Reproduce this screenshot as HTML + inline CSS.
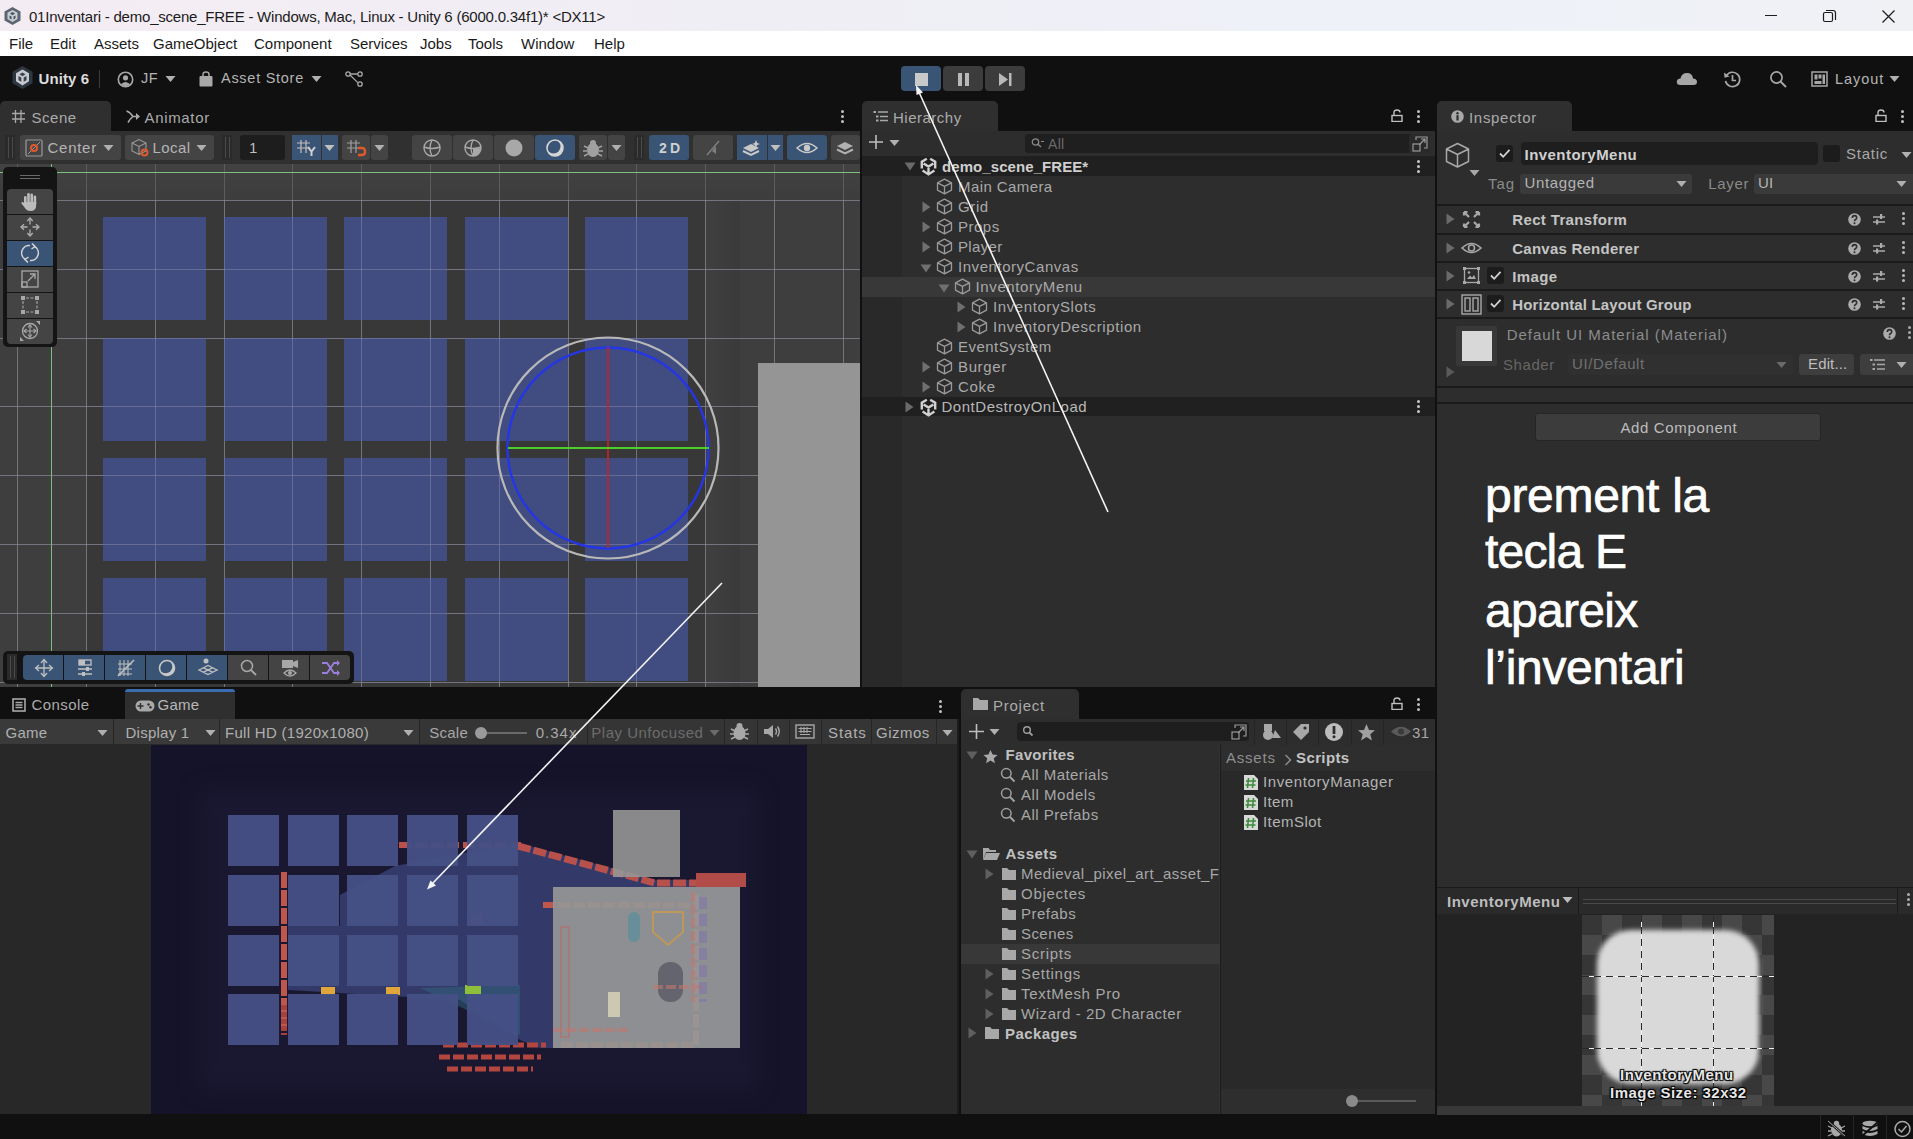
<!DOCTYPE html><html><head><meta charset="utf-8"><style>
html,body{margin:0;padding:0;width:1913px;height:1139px;overflow:hidden;background:#101010;font-family:"Liberation Sans", sans-serif;}
div,svg{box-sizing:border-box;}
</style></head><body>
<div style="position:absolute;left:0px;top:0px;width:1913px;height:31px;background:linear-gradient(90deg,#f4ecf3 0%,#efeef5 45%,#eef2f8 75%,#f0f1f5 100%);"></div>
<div style="position:absolute;left:29px;top:9.30px;font-size:15px;line-height:15px;color:#1b1b1b;font-weight:400;white-space:pre;;letter-spacing:-0.219px;">01Inventari - demo_scene_FREE - Windows, Mac, Linux - Unity 6 (6000.0.34f1)* &lt;DX11&gt;</div>
<div style="position:absolute;left:0px;top:31px;width:1913px;height:25px;background:#ffffff;"></div>
<div style="position:absolute;left:9px;top:35.90px;font-size:15px;line-height:15px;color:#1a1a1a;font-weight:400;white-space:pre;;">File</div>
<div style="position:absolute;left:50px;top:35.90px;font-size:15px;line-height:15px;color:#1a1a1a;font-weight:400;white-space:pre;;">Edit</div>
<div style="position:absolute;left:94px;top:35.90px;font-size:15px;line-height:15px;color:#1a1a1a;font-weight:400;white-space:pre;;">Assets</div>
<div style="position:absolute;left:153px;top:35.90px;font-size:15px;line-height:15px;color:#1a1a1a;font-weight:400;white-space:pre;;">GameObject</div>
<div style="position:absolute;left:254px;top:35.90px;font-size:15px;line-height:15px;color:#1a1a1a;font-weight:400;white-space:pre;;">Component</div>
<div style="position:absolute;left:350px;top:35.90px;font-size:15px;line-height:15px;color:#1a1a1a;font-weight:400;white-space:pre;;">Services</div>
<div style="position:absolute;left:420px;top:35.90px;font-size:15px;line-height:15px;color:#1a1a1a;font-weight:400;white-space:pre;;">Jobs</div>
<div style="position:absolute;left:468px;top:35.90px;font-size:15px;line-height:15px;color:#1a1a1a;font-weight:400;white-space:pre;;">Tools</div>
<div style="position:absolute;left:521px;top:35.90px;font-size:15px;line-height:15px;color:#1a1a1a;font-weight:400;white-space:pre;;">Window</div>
<div style="position:absolute;left:594px;top:35.90px;font-size:15px;line-height:15px;color:#1a1a1a;font-weight:400;white-space:pre;;">Help</div>
<div style="position:absolute;left:0px;top:56px;width:1913px;height:44px;background:#101010;"></div>
<svg style="position:absolute;left:3px;top:6px;" width="19" height="20" viewBox="0 0 19 20"><path d="M9.5 1 L17.5 5.5 L17.5 14.5 L9.5 19 L1.5 14.5 L1.5 5.5 Z" fill="#5d6670"/><path d="M9.5 4 L14.5 6.8 L14.5 13 L9.5 16 L4.5 13 L4.5 6.8 Z" fill="#c9ced6"/><path d="M9.5 6 L12 7.6 L9.5 9.2 L7 7.6Z M6.5 9.5 L8.5 10.6 L8.5 13.5 L6.5 12.3Z M12.5 9.5 L10.5 10.6 L10.5 13.5 L12.5 12.3Z" fill="#4a525c"/></svg>
<div style="position:absolute;left:1765px;top:15px;width:12px;height:1px;background:#1c1c1c;"></div>
<svg style="position:absolute;left:1822px;top:9px;" width="15" height="15" viewBox="0 0 15 15"><rect x="1.5" y="3.5" width="9" height="9" rx="1.5" fill="none" stroke="#1c1c1c" stroke-width="1.2"/><path d="M4 1.5 H11 Q13.5 1.5 13.5 4 V11" fill="none" stroke="#1c1c1c" stroke-width="1.2"/></svg>
<svg style="position:absolute;left:1881px;top:9px;" width="15" height="15" viewBox="0 0 15 15"><path d="M1.5 1.5 L13.5 13.5 M13.5 1.5 L1.5 13.5" stroke="#1c1c1c" stroke-width="1.2"/></svg>
<svg style="position:absolute;left:11px;top:65px;" width="23" height="25" viewBox="0 0 23 25"><path d="M11.5 1 L21.5 6.8 L21.5 18.2 L11.5 24 L1.5 18.2 L1.5 6.8 Z" fill="#2e3640"/><path d="M11.5 4.5 L18 8.3 L18 16.3 L11.5 20.5 L5 16.3 L5 8.3 Z" fill="#c6cad0"/><path d="M11.5 7.5 L14.5 9.3 L11.5 11.2 L8.5 9.3Z M7.5 11 L10.3 12.6 L10.3 16.8 L7.5 15.2Z M15.5 11 L12.7 12.6 L12.7 16.8 L15.5 15.2Z" fill="#39414b"/></svg>
<div style="position:absolute;left:38.5px;top:71.30px;font-size:15px;line-height:15px;color:#dcdcdc;font-weight:700;white-space:pre;;letter-spacing:0.114px;">Unity 6</div>
<div style="position:absolute;left:99px;top:70px;width:1px;height:18px;background:#3a3a3a;"></div>
<svg style="position:absolute;left:117px;top:71px;" width="17" height="17" viewBox="0 0 17 17"><circle cx="8.5" cy="8.5" r="7.2" fill="none" stroke="#a8a8a8" stroke-width="1.6"/><circle cx="8.5" cy="6.8" r="2.6" fill="#a8a8a8"/><path d="M3.6 13.6 Q8.5 8.5 13.4 13.6 Q8.5 17 3.6 13.6Z" fill="#a8a8a8"/></svg>
<div style="position:absolute;left:141px;top:71.23px;font-size:14.5px;line-height:14.5px;color:#b4b4b4;font-weight:400;white-space:pre;;letter-spacing:0.591px;">JF</div>
<svg style="position:absolute;left:165px;top:75px;" width="11" height="8" viewBox="0 0 11 8"><path d="M0.5 1 L10.5 1 L5.5 7Z" fill="#b0b0b0"/></svg>
<svg style="position:absolute;left:199px;top:71px;" width="14" height="16" viewBox="0 0 14 16"><path d="M4 5 V3.2 Q4 1 7 1 Q10 1 10 3.2 V5" fill="none" stroke="#a8a8a8" stroke-width="1.5"/><rect x="0.5" y="5" width="13" height="10.5" rx="1" fill="#a8a8a8"/></svg>
<div style="position:absolute;left:221px;top:71.23px;font-size:14.5px;line-height:14.5px;color:#b4b4b4;font-weight:400;white-space:pre;;letter-spacing:0.725px;">Asset Store</div>
<svg style="position:absolute;left:311px;top:75px;" width="11" height="8" viewBox="0 0 11 8"><path d="M0.5 1 L10.5 1 L5.5 7Z" fill="#b0b0b0"/></svg>
<svg style="position:absolute;left:345px;top:71px;" width="18" height="16" viewBox="0 0 18 16"><circle cx="3" cy="3" r="2.2" fill="none" stroke="#a8a8a8" stroke-width="1.3"/><circle cx="15" cy="3" r="2.2" fill="none" stroke="#a8a8a8" stroke-width="1.3"/><circle cx="15" cy="13" r="2.2" fill="none" stroke="#a8a8a8" stroke-width="1.3"/><path d="M5.2 3 H12.8 M5 4 L12.8 11.6" stroke="#a8a8a8" stroke-width="1.3" fill="none"/></svg>
<div style="position:absolute;left:901px;top:66px;width:40px;height:25px;background:#3a5475;border-radius:4px"></div>
<div style="position:absolute;left:915px;top:73px;width:13px;height:13px;background:#c9c9c9;"></div>
<div style="position:absolute;left:943px;top:66px;width:40px;height:25px;background:#3c3c3c;border-radius:4px"></div>
<div style="position:absolute;left:958px;top:73px;width:4px;height:13px;background:#b8b8b8;"></div>
<div style="position:absolute;left:965px;top:73px;width:4px;height:13px;background:#b8b8b8;"></div>
<div style="position:absolute;left:985px;top:66px;width:40px;height:25px;background:#3c3c3c;border-radius:4px"></div>
<svg style="position:absolute;left:999px;top:73px;" width="13" height="13" viewBox="0 0 13 13"><path d="M0 0 L9 6.5 L0 13Z" fill="#b8b8b8"/><rect x="10" y="0" width="2.5" height="13" fill="#b8b8b8"/></svg>
<svg style="position:absolute;left:1676px;top:71px;" width="22" height="15" viewBox="0 0 22 15"><path d="M4.5 14 Q0.5 14 0.8 10.5 Q1.2 7.5 4.5 7.5 Q5.5 2 11 2 Q16.5 2 17 7.5 Q21 7.8 21 11 Q21 14 17.5 14Z" fill="#a6a6a6"/></svg>
<svg style="position:absolute;left:1723px;top:70px;" width="19" height="19" viewBox="0 0 19 19"><path d="M3.5 5.5 A7.2 7.2 0 1 1 2.5 11" fill="none" stroke="#a6a6a6" stroke-width="1.7"/><path d="M1 2.5 L1.5 7.8 L6.5 6.5Z" fill="#a6a6a6"/><path d="M9.5 5 V10.5 H13" fill="none" stroke="#a6a6a6" stroke-width="1.7"/></svg>
<svg style="position:absolute;left:1769px;top:70px;" width="19" height="19" viewBox="0 0 19 19"><circle cx="7.5" cy="7.5" r="5.6" fill="none" stroke="#a6a6a6" stroke-width="1.7"/><path d="M11.5 11.5 L17 17" stroke="#a6a6a6" stroke-width="2"/></svg>
<svg style="position:absolute;left:1811px;top:71px;" width="17" height="16" viewBox="0 0 17 16"><rect x="1" y="1" width="15" height="14" fill="none" stroke="#a6a6a6" stroke-width="1.5"/><rect x="3.5" y="3.5" width="3" height="5" fill="#a6a6a6"/><rect x="7.5" y="3.5" width="3" height="4" fill="#a6a6a6"/><rect x="3.5" y="10" width="7" height="3" fill="#a6a6a6"/><rect x="11.5" y="3.5" width="2.5" height="9.5" fill="#a6a6a6"/></svg>
<div style="position:absolute;left:1835px;top:71.73px;font-size:14.5px;line-height:14.5px;color:#b4b4b4;font-weight:400;white-space:pre;;letter-spacing:0.931px;">Layout</div>
<svg style="position:absolute;left:1889px;top:75px;" width="11" height="8" viewBox="0 0 11 8"><path d="M0.5 1 L10.5 1 L5.5 7Z" fill="#b0b0b0"/></svg>
<div style="position:absolute;left:0px;top:101px;width:111px;height:31px;background:#2f2f2f;border-radius:5px 5px 0 0"></div>
<svg style="position:absolute;left:11px;top:109px;" width="15" height="15" viewBox="0 0 15 15"><path d="M4.5 1 V14 M10 1 V14 M1 4.5 H14 M1 10 H14" stroke="#a8a8a8" stroke-width="1.3"/></svg>
<div style="position:absolute;left:31.5px;top:110.00px;font-size:15px;line-height:15px;color:#ababab;font-weight:400;white-space:pre;;letter-spacing:0.538px;">Scene</div>
<svg style="position:absolute;left:125px;top:109px;" width="16" height="15" viewBox="0 0 16 15"><path d="M1.5 2 Q5 3 8 7.5 L14 7.5 M8 7.5 Q5 10 3 13.5" fill="none" stroke="#a8a8a8" stroke-width="1.6"/><path d="M11 4 L15 7.5 L11 11Z" fill="#a8a8a8"/></svg>
<div style="position:absolute;left:144.5px;top:110.00px;font-size:15px;line-height:15px;color:#ababab;font-weight:400;white-space:pre;;letter-spacing:0.667px;">Animator</div>
<div style="position:absolute;left:841px;top:110px;width:3px;height:3px;background:#c0c0c0;border-radius:50%"></div>
<div style="position:absolute;left:841px;top:115px;width:3px;height:3px;background:#c0c0c0;border-radius:50%"></div>
<div style="position:absolute;left:841px;top:120px;width:3px;height:3px;background:#c0c0c0;border-radius:50%"></div>
<div style="position:absolute;left:0px;top:131px;width:860px;height:33px;background:#303030;"></div>
<div style="position:absolute;left:5px;top:135px;width:10px;height:25px;background:#2a2a2a;"></div>
<div style="position:absolute;left:8px;top:137px;width:1px;height:21px;background:#4a4a4a;"></div>
<div style="position:absolute;left:12px;top:137px;width:1px;height:21px;background:#4a4a4a;"></div>
<div style="position:absolute;left:222px;top:135px;width:10px;height:25px;background:#2a2a2a;"></div>
<div style="position:absolute;left:225px;top:137px;width:1px;height:21px;background:#4a4a4a;"></div>
<div style="position:absolute;left:229px;top:137px;width:1px;height:21px;background:#4a4a4a;"></div>
<div style="position:absolute;left:634px;top:135px;width:10px;height:25px;background:#2a2a2a;"></div>
<div style="position:absolute;left:637px;top:137px;width:1px;height:21px;background:#4a4a4a;"></div>
<div style="position:absolute;left:641px;top:137px;width:1px;height:21px;background:#4a4a4a;"></div>
<div style="position:absolute;left:20px;top:135px;width:101px;height:25px;background:#444444;border-radius:3px"></div>
<svg style="position:absolute;left:25px;top:139px;" width="18" height="18" viewBox="0 0 18 18"><rect x="1" y="1" width="16" height="16" rx="1" fill="none" stroke="#9a9a9a" stroke-width="1.2"/><path d="M3 15 L15 3" stroke="#9a9a9a" stroke-width="1"/><circle cx="9" cy="9" r="3" fill="none" stroke="#e0592e" stroke-width="2"/></svg>
<div style="position:absolute;left:47.5px;top:139.90px;font-size:15px;line-height:15px;color:#b4b4b4;font-weight:400;white-space:pre;;letter-spacing:0.734px;">Center</div>
<svg style="position:absolute;left:103px;top:144px;" width="11" height="8" viewBox="0 0 11 8"><path d="M0.5 1 L10.5 1 L5.5 7Z" fill="#b0b0b0"/></svg>
<div style="position:absolute;left:125px;top:135px;width:89px;height:25px;background:#444444;border-radius:3px"></div>
<svg style="position:absolute;left:130px;top:138px;" width="20" height="20" viewBox="0 0 20 20"><path d="M2 5 L9 1.5 L16 5 L16 13 L9 16.5 L2 13Z M2 5 L9 8.5 L16 5 M9 8.5 V16.5" fill="none" stroke="#9a9a9a" stroke-width="1.1"/><circle cx="14.5" cy="14.5" r="3" fill="none" stroke="#e0592e" stroke-width="2"/></svg>
<div style="position:absolute;left:152.5px;top:139.90px;font-size:15px;line-height:15px;color:#b4b4b4;font-weight:400;white-space:pre;;letter-spacing:0.460px;">Local</div>
<svg style="position:absolute;left:196px;top:144px;" width="11" height="8" viewBox="0 0 11 8"><path d="M0.5 1 L10.5 1 L5.5 7Z" fill="#b0b0b0"/></svg>
<div style="position:absolute;left:240px;top:135px;width:45px;height:25px;background:#1d1d1d;border-radius:3px"></div>
<div style="position:absolute;left:249px;top:139.90px;font-size:15px;line-height:15px;color:#bdbdbd;font-weight:400;white-space:pre;;">1</div>
<div style="position:absolute;left:292px;top:135px;width:29px;height:25px;background:#3a5475;border-radius:0px"></div>
<div style="position:absolute;left:322px;top:135px;width:16px;height:25px;background:#3a5475;border-radius:0px"></div>
<svg style="position:absolute;left:296px;top:139px;" width="22" height="18" viewBox="0 0 22 18"><path d="M5 1 V14 M10 1 V14 M1 4 H14 M1 9 H14" stroke="#c0c0c0" stroke-width="1.2"/><path d="M12 8 L15.5 12.5 L19 8 M15.5 12.5 V17" stroke="#d0d0d0" stroke-width="2" fill="none"/></svg>
<svg style="position:absolute;left:324px;top:144px;" width="11" height="8" viewBox="0 0 11 8"><path d="M0.5 1 L10.5 1 L5.5 7Z" fill="#c0c0c0"/></svg>
<div style="position:absolute;left:342px;top:135px;width:28px;height:25px;background:#444444;border-radius:3px"></div>
<div style="position:absolute;left:371px;top:135px;width:17px;height:25px;background:#444444;border-radius:3px"></div>
<svg style="position:absolute;left:346px;top:139px;" width="22" height="18" viewBox="0 0 22 18"><path d="M5 1 V14 M10 1 V14 M1 4 H14 M1 9 H14" stroke="#a0a0a0" stroke-width="1.2"/><path d="M12 9 H16 Q19 9 19 12.5 Q19 16 16 16 H12" stroke="#e0592e" stroke-width="2.4" fill="none"/></svg>
<svg style="position:absolute;left:374px;top:144px;" width="11" height="8" viewBox="0 0 11 8"><path d="M0.5 1 L10.5 1 L5.5 7Z" fill="#b0b0b0"/></svg>
<div style="position:absolute;left:412px;top:135px;width:40px;height:25px;background:#444444;border-radius:3px"></div>
<div style="position:absolute;left:453px;top:135px;width:40px;height:25px;background:#444444;border-radius:3px"></div>
<div style="position:absolute;left:494px;top:135px;width:40px;height:25px;background:#444444;border-radius:3px"></div>
<svg style="position:absolute;left:420px;top:138px;" width="24" height="20" viewBox="0 0 24 20"><circle cx="12" cy="10" r="8" fill="none" stroke="#a8a8a8" stroke-width="1.4"/><path d="M4 9 Q12 12 20 9 M12 2 Q8 10 12 18" fill="none" stroke="#a8a8a8" stroke-width="1.4"/></svg>
<svg style="position:absolute;left:461px;top:138px;" width="24" height="20" viewBox="0 0 24 20"><circle cx="12" cy="10" r="8" fill="none" stroke="#a8a8a8" stroke-width="1.4"/><path d="M4 9 Q12 12 20 9 M12 2 Q8 10 12 18" fill="none" stroke="#a8a8a8" stroke-width="1.4"/><path d="M12 11 L20 10 A8 8 0 0 1 12 18Z" fill="#a8a8a8"/></svg>
<svg style="position:absolute;left:502px;top:138px;" width="24" height="20" viewBox="0 0 24 20"><circle cx="12" cy="10" r="8.5" fill="#a8a8a8"/></svg>
<div style="position:absolute;left:535px;top:135px;width:40px;height:25px;background:#3a5475;border-radius:3px"></div>
<svg style="position:absolute;left:543px;top:138px;" width="24" height="20" viewBox="0 0 24 20"><mask id="mk1"><rect width="24" height="20" fill="#fff"/><circle cx="10.5" cy="8.5" r="7" fill="#000"/></mask><circle cx="12" cy="10" r="8" fill="none" stroke="#d4d4d4" stroke-width="1.6"/><circle cx="12" cy="10" r="8" fill="#d4d4d4" mask="url(#mk1)"/></svg>
<div style="position:absolute;left:579px;top:135px;width:28px;height:25px;background:#444444;border-radius:3px"></div>
<div style="position:absolute;left:608px;top:135px;width:17px;height:25px;background:#444444;border-radius:3px"></div>
<svg style="position:absolute;left:582px;top:138px;" width="22" height="20" viewBox="0 0 22 20"><ellipse cx="11" cy="12" rx="6" ry="7" fill="#a0a0a0"/><circle cx="11" cy="5" r="3" fill="#a0a0a0"/><path d="M2 8 L6 10 M20 8 L16 10 M1 13 H5 M21 13 H17 M2 18 L6 16 M20 18 L16 16" stroke="#a0a0a0" stroke-width="1.4"/></svg>
<svg style="position:absolute;left:611px;top:144px;" width="11" height="8" viewBox="0 0 11 8"><path d="M0.5 1 L10.5 1 L5.5 7Z" fill="#b0b0b0"/></svg>
<div style="position:absolute;left:649px;top:135px;width:40px;height:25px;background:#3a5475;border-radius:3px"></div>
<div style="position:absolute;left:659px;top:140.75px;font-size:14px;line-height:14px;color:#d0d0d0;font-weight:700;white-space:pre;;letter-spacing:3.294px;">2D</div>
<div style="position:absolute;left:693px;top:135px;width:40px;height:25px;background:#444444;border-radius:3px"></div>
<svg style="position:absolute;left:703px;top:138px;" width="20" height="20" viewBox="0 0 20 20"><path d="M4 17 L16 3" stroke="#808080" stroke-width="1.4"/><path d="M9 13 L13 8 V16Z" fill="#808080"/></svg>
<div style="position:absolute;left:737px;top:135px;width:30px;height:25px;background:#3a5475;border-radius:0px"></div>
<div style="position:absolute;left:768px;top:135px;width:15px;height:25px;background:#3a5475;border-radius:0px"></div>
<svg style="position:absolute;left:741px;top:139px;" width="22" height="18" viewBox="0 0 22 18"><path d="M2 9 L10 5 L18 9 L10 13Z" fill="#c8c8c8"/><path d="M2 12 L10 16 L18 12" fill="none" stroke="#c8c8c8" stroke-width="2"/><path d="M15 1 L16.2 4 L19 5 L16.2 6 L15 9 L13.8 6 L11 5 L13.8 4Z" fill="#c8c8c8"/></svg>
<svg style="position:absolute;left:770px;top:144px;" width="11" height="8" viewBox="0 0 11 8"><path d="M0.5 1 L10.5 1 L5.5 7Z" fill="#c0c0c0"/></svg>
<div style="position:absolute;left:787px;top:135px;width:40px;height:25px;background:#3a5475;border-radius:3px"></div>
<svg style="position:absolute;left:796px;top:141px;" width="22" height="14" viewBox="0 0 22 14"><path d="M1 7 Q11 -2 21 7 Q11 16 1 7Z" fill="none" stroke="#c8c8c8" stroke-width="1.6"/><circle cx="11" cy="7" r="3.2" fill="#c8c8c8"/></svg>
<div style="position:absolute;left:831px;top:135px;width:29px;height:25px;background:#444444;border-radius:3px"></div>
<svg style="position:absolute;left:835px;top:139px;" width="20" height="18" viewBox="0 0 20 18"><path d="M2 7 L10 3 L18 7 L10 11Z" fill="#b0b0b0"/><path d="M2 10.5 L10 14.5 L18 10.5" fill="none" stroke="#b0b0b0" stroke-width="2"/></svg>
<div style="position:absolute;left:0px;top:164px;width:860px;height:523px;background:#3e3e3e;"></div>
<div style="position:absolute;left:0px;top:164px;width:860px;height:36px;background:linear-gradient(180deg,#424242,#3d3d3d);"></div>
<div style="position:absolute;left:705px;top:200px;width:35px;height:487px;background:linear-gradient(90deg,#404040,#3a3a3a);"></div>
<div style="position:absolute;left:86px;top:200px;width:619px;height:487px;background:#383838;"></div>
<div style="position:absolute;left:17px;top:164px;width:1px;height:523px;background:#5c5c5c;"></div>
<div style="position:absolute;left:86px;top:164px;width:1px;height:523px;background:#5c5c5c;"></div>
<div style="position:absolute;left:155px;top:164px;width:1px;height:523px;background:#5c5c5c;"></div>
<div style="position:absolute;left:224px;top:164px;width:1px;height:523px;background:#5c5c5c;"></div>
<div style="position:absolute;left:292px;top:164px;width:1px;height:523px;background:#5c5c5c;"></div>
<div style="position:absolute;left:361px;top:164px;width:1px;height:523px;background:#5c5c5c;"></div>
<div style="position:absolute;left:430px;top:164px;width:1px;height:523px;background:#5c5c5c;"></div>
<div style="position:absolute;left:499px;top:164px;width:1px;height:523px;background:#5c5c5c;"></div>
<div style="position:absolute;left:568px;top:164px;width:1px;height:523px;background:#5c5c5c;"></div>
<div style="position:absolute;left:636px;top:164px;width:1px;height:523px;background:#5c5c5c;"></div>
<div style="position:absolute;left:705px;top:164px;width:1px;height:523px;background:#5c5c5c;"></div>
<div style="position:absolute;left:774px;top:164px;width:1px;height:523px;background:#5c5c5c;"></div>
<div style="position:absolute;left:843px;top:164px;width:1px;height:523px;background:#5c5c5c;"></div>
<div style="position:absolute;left:0px;top:200px;width:860px;height:1px;background:#5c5c5c;"></div>
<div style="position:absolute;left:0px;top:269px;width:860px;height:1px;background:#5c5c5c;"></div>
<div style="position:absolute;left:0px;top:338px;width:860px;height:1px;background:#5c5c5c;"></div>
<div style="position:absolute;left:0px;top:406px;width:860px;height:1px;background:#5c5c5c;"></div>
<div style="position:absolute;left:0px;top:475px;width:860px;height:1px;background:#5c5c5c;"></div>
<div style="position:absolute;left:0px;top:544px;width:860px;height:1px;background:#5c5c5c;"></div>
<div style="position:absolute;left:0px;top:613px;width:860px;height:1px;background:#5c5c5c;"></div>
<div style="position:absolute;left:0px;top:682px;width:860px;height:1px;background:#5c5c5c;"></div>
<div style="position:absolute;left:51px;top:164px;width:1px;height:523px;background:#79c27a;"></div>
<div style="position:absolute;left:0px;top:172px;width:860px;height:1px;background:#79c27a;"></div>
<div style="position:absolute;left:103px;top:216.5px;width:103px;height:103px;background:rgba(66,78,135,0.92);"></div>
<div style="position:absolute;left:103px;top:337.5px;width:103px;height:103px;background:rgba(66,78,135,0.92);"></div>
<div style="position:absolute;left:103px;top:458px;width:103px;height:103px;background:rgba(66,78,135,0.92);"></div>
<div style="position:absolute;left:103px;top:578px;width:103px;height:103px;background:rgba(66,78,135,0.92);"></div>
<div style="position:absolute;left:223.5px;top:216.5px;width:103px;height:103px;background:rgba(66,78,135,0.92);"></div>
<div style="position:absolute;left:223.5px;top:337.5px;width:103px;height:103px;background:rgba(66,78,135,0.92);"></div>
<div style="position:absolute;left:223.5px;top:458px;width:103px;height:103px;background:rgba(66,78,135,0.92);"></div>
<div style="position:absolute;left:223.5px;top:578px;width:103px;height:103px;background:rgba(66,78,135,0.92);"></div>
<div style="position:absolute;left:344px;top:216.5px;width:103px;height:103px;background:rgba(66,78,135,0.92);"></div>
<div style="position:absolute;left:344px;top:337.5px;width:103px;height:103px;background:rgba(66,78,135,0.92);"></div>
<div style="position:absolute;left:344px;top:458px;width:103px;height:103px;background:rgba(66,78,135,0.92);"></div>
<div style="position:absolute;left:344px;top:578px;width:103px;height:103px;background:rgba(66,78,135,0.92);"></div>
<div style="position:absolute;left:464.5px;top:216.5px;width:103px;height:103px;background:rgba(66,78,135,0.92);"></div>
<div style="position:absolute;left:464.5px;top:337.5px;width:103px;height:103px;background:rgba(66,78,135,0.92);"></div>
<div style="position:absolute;left:464.5px;top:458px;width:103px;height:103px;background:rgba(66,78,135,0.92);"></div>
<div style="position:absolute;left:464.5px;top:578px;width:103px;height:103px;background:rgba(66,78,135,0.92);"></div>
<div style="position:absolute;left:585px;top:216.5px;width:103px;height:103px;background:rgba(66,78,135,0.92);"></div>
<div style="position:absolute;left:585px;top:337.5px;width:103px;height:103px;background:rgba(66,78,135,0.92);"></div>
<div style="position:absolute;left:585px;top:458px;width:103px;height:103px;background:rgba(66,78,135,0.92);"></div>
<div style="position:absolute;left:585px;top:578px;width:103px;height:103px;background:rgba(66,78,135,0.92);"></div>
<div style="position:absolute;left:17px;top:200px;width:1px;height:487px;background:rgba(150,150,175,0.42);"></div>
<div style="position:absolute;left:86px;top:200px;width:1px;height:487px;background:rgba(150,150,175,0.42);"></div>
<div style="position:absolute;left:155px;top:200px;width:1px;height:487px;background:rgba(150,150,175,0.42);"></div>
<div style="position:absolute;left:224px;top:200px;width:1px;height:487px;background:rgba(150,150,175,0.42);"></div>
<div style="position:absolute;left:292px;top:200px;width:1px;height:487px;background:rgba(150,150,175,0.42);"></div>
<div style="position:absolute;left:361px;top:200px;width:1px;height:487px;background:rgba(150,150,175,0.42);"></div>
<div style="position:absolute;left:430px;top:200px;width:1px;height:487px;background:rgba(150,150,175,0.42);"></div>
<div style="position:absolute;left:499px;top:200px;width:1px;height:487px;background:rgba(150,150,175,0.42);"></div>
<div style="position:absolute;left:568px;top:200px;width:1px;height:487px;background:rgba(150,150,175,0.42);"></div>
<div style="position:absolute;left:636px;top:200px;width:1px;height:487px;background:rgba(150,150,175,0.42);"></div>
<div style="position:absolute;left:705px;top:200px;width:1px;height:487px;background:rgba(150,150,175,0.42);"></div>
<div style="position:absolute;left:774px;top:200px;width:1px;height:487px;background:rgba(150,150,175,0.42);"></div>
<div style="position:absolute;left:843px;top:200px;width:1px;height:487px;background:rgba(150,150,175,0.42);"></div>
<div style="position:absolute;left:0px;top:200px;width:860px;height:1px;background:rgba(150,150,175,0.42);"></div>
<div style="position:absolute;left:0px;top:269px;width:860px;height:1px;background:rgba(150,150,175,0.42);"></div>
<div style="position:absolute;left:0px;top:338px;width:860px;height:1px;background:rgba(150,150,175,0.42);"></div>
<div style="position:absolute;left:0px;top:406px;width:860px;height:1px;background:rgba(150,150,175,0.42);"></div>
<div style="position:absolute;left:0px;top:475px;width:860px;height:1px;background:rgba(150,150,175,0.42);"></div>
<div style="position:absolute;left:0px;top:544px;width:860px;height:1px;background:rgba(150,150,175,0.42);"></div>
<div style="position:absolute;left:0px;top:613px;width:860px;height:1px;background:rgba(150,150,175,0.42);"></div>
<div style="position:absolute;left:0px;top:682px;width:860px;height:1px;background:rgba(150,150,175,0.42);"></div>
<div style="position:absolute;left:758px;top:363px;width:102px;height:324px;background:#959595;"></div>
<svg style="position:absolute;left:490px;top:330px;" width="240" height="240" viewBox="0 0 240 240"><circle cx="118" cy="118" r="110.5" fill="none" stroke="#b8b8b8" stroke-width="2.2"/><circle cx="118" cy="118" r="100.5" fill="none" stroke="#2436e6" stroke-width="2.4"/><path d="M118 17 V218" stroke="#c22" stroke-width="1.6"/><path d="M18 118 H219" stroke="#4ccf2a" stroke-width="2.2"/></svg>
<div style="position:absolute;left:3px;top:167px;width:54px;height:180px;background:#141414;border-radius:5px"></div>
<div style="position:absolute;left:20px;top:175px;width:20px;height:1px;background:#6a6a6a;"></div>
<div style="position:absolute;left:20px;top:178px;width:20px;height:1px;background:#6a6a6a;"></div>
<div style="position:absolute;left:7px;top:189px;width:46px;height:25px;background:#444444;border-radius:4px 4px 0 0"></div>
<div style="position:absolute;left:7px;top:215px;width:46px;height:25px;background:#444444;border-radius:0"></div>
<div style="position:absolute;left:7px;top:241px;width:46px;height:25px;background:#3a5475;border-radius:0"></div>
<div style="position:absolute;left:7px;top:267px;width:46px;height:25px;background:#444444;border-radius:0"></div>
<div style="position:absolute;left:7px;top:293px;width:46px;height:25px;background:#444444;border-radius:0"></div>
<div style="position:absolute;left:7px;top:319px;width:46px;height:25px;background:#444444;border-radius:0 0 4px 4px"></div>
<svg style="position:absolute;left:19px;top:191px;" width="22" height="22" viewBox="0 0 22 22"><rect x="5" y="5" width="2.6" height="9" rx="1.3" fill="#bcbcbc"/><rect x="8.2" y="2" width="2.6" height="11" rx="1.3" fill="#bcbcbc"/><rect x="11.4" y="2.5" width="2.6" height="10.5" rx="1.3" fill="#bcbcbc"/><rect x="14.6" y="4.5" width="2.6" height="9" rx="1.3" fill="#bcbcbc"/><path d="M5 11 H17.2 V14 Q17.2 20 11.5 20 Q7.5 20 6 17 L2.5 12.5 Q2 11.3 3.3 11 Q4.2 10.8 5 12Z" fill="#bcbcbc"/></svg>
<svg style="position:absolute;left:19px;top:216px;" width="22" height="22" viewBox="0 0 22 22"><path d="M11 2.5 V8.5 M11 13.5 V19.5 M2.5 11 H8.5 M13.5 11 H19.5" stroke="#b0b0b0" stroke-width="1.3"/><path d="M8.3 5 L11 2 L13.7 5 M8.3 17 L11 20 L13.7 17 M5 8.3 L2 11 L5 13.7 M17 8.3 L20 11 L17 13.7" fill="none" stroke="#b0b0b0" stroke-width="1.3"/></svg>
<svg style="position:absolute;left:19px;top:242px;" width="22" height="22" viewBox="0 0 22 22"><path d="M15.5 4.5 A7.5 7.5 0 0 1 11 18.5 M6.5 17.5 A7.5 7.5 0 0 1 11 3.5" fill="none" stroke="#d4d4d4" stroke-width="1.5"/><path d="M13 1.5 L16 4.5 L12.5 7 M9 20.5 L6 17.5 L9.5 15" fill="none" stroke="#d4d4d4" stroke-width="1.5"/></svg>
<svg style="position:absolute;left:19px;top:268px;" width="22" height="22" viewBox="0 0 22 22"><rect x="3" y="3" width="16" height="16" fill="none" stroke="#a8a8a8" stroke-width="1.3"/><rect x="3" y="14" width="5" height="5" fill="none" stroke="#a8a8a8" stroke-width="1.3"/><path d="M9 13 L16 6 M11 6 H16 V11" fill="none" stroke="#a8a8a8" stroke-width="1.3"/></svg>
<svg style="position:absolute;left:19px;top:294px;" width="22" height="22" viewBox="0 0 22 22"><path d="M7 4 H15 M7 18 H15 M4 7 V15 M18 7 V15" stroke="#a8a8a8" stroke-width="1.1" stroke-dasharray="3 1.5"/><rect x="2" y="2" width="4" height="4" fill="#a8a8a8"/><rect x="16" y="2" width="4" height="4" fill="#a8a8a8"/><rect x="2" y="16" width="4" height="4" fill="#a8a8a8"/><rect x="16" y="16" width="4" height="4" fill="#a8a8a8"/></svg>
<svg style="position:absolute;left:19px;top:320px;" width="22" height="22" viewBox="0 0 22 22"><circle cx="11" cy="11" r="7.5" fill="none" stroke="#a8a8a8" stroke-width="1.3"/><path d="M11 5.5 V16.5 M5.5 11 H16.5" stroke="#a8a8a8" stroke-width="1.1"/><path d="M9 7.5 L11 5 L13 7.5 M9 14.5 L11 17 L13 14.5 M7.5 9 L5 11 L7.5 13 M14.5 9 L17 11 L14.5 13" fill="none" stroke="#a8a8a8" stroke-width="1.1"/><path d="M1 21 L5 21 L1 17Z M21 1 L17 1 L21 5Z" fill="#a8a8a8"/></svg>
<div style="position:absolute;left:3px;top:651px;width:351px;height:33px;background:#141414;border-radius:5px"></div>
<div style="position:absolute;left:7px;top:654px;width:10px;height:26px;background:#2a2a2a;"></div>
<div style="position:absolute;left:10px;top:656px;width:1px;height:22px;background:#4a4a4a;"></div>
<div style="position:absolute;left:14px;top:656px;width:1px;height:22px;background:#4a4a4a;"></div>
<div style="position:absolute;left:23px;top:655px;width:40px;height:25px;background:#3a5475;border-radius:4px 0 0 4px"></div>
<div style="position:absolute;left:64px;top:655px;width:40px;height:25px;background:#3a5475;border-radius:0"></div>
<div style="position:absolute;left:105px;top:655px;width:40px;height:25px;background:#3a5475;border-radius:0"></div>
<div style="position:absolute;left:146px;top:655px;width:40px;height:25px;background:#3a5475;border-radius:0"></div>
<div style="position:absolute;left:187px;top:655px;width:40px;height:25px;background:#3a5475;border-radius:0"></div>
<div style="position:absolute;left:228px;top:655px;width:40px;height:25px;background:#444444;border-radius:0"></div>
<div style="position:absolute;left:269px;top:655px;width:40px;height:25px;background:#444444;border-radius:0"></div>
<div style="position:absolute;left:310px;top:655px;width:40px;height:25px;background:#444444;border-radius:0 4px 4px 0"></div>
<svg style="position:absolute;left:33px;top:657px;" width="22" height="22" viewBox="0 0 22 22"><path d="M11 3 V19 M3 11 H19" stroke="#c0c0c0" stroke-width="1.3"/><path d="M8 6 L11 2.5 L14 6 M8 16 L11 19.5 L14 16 M6 8 L2.5 11 L6 14 M16 8 L19.5 11 L16 14" fill="none" stroke="#c0c0c0" stroke-width="1.3"/></svg>
<svg style="position:absolute;left:74px;top:657px;" width="22" height="22" viewBox="0 0 22 22"><rect x="5" y="3" width="12" height="5" fill="none" stroke="#c0c0c0" stroke-width="1.3"/><rect x="5" y="3" width="6" height="5" fill="#c0c0c0"/><path d="M4 12 H18 M4 17 H18" stroke="#c0c0c0" stroke-width="1.3"/><rect x="12" y="10" width="3" height="4" fill="#c0c0c0"/><rect x="8" y="15" width="3" height="4" fill="#c0c0c0"/></svg>
<svg style="position:absolute;left:115px;top:657px;" width="22" height="22" viewBox="0 0 22 22"><path d="M5 3 V19 M9 3 V19 M13 3 V19 M3 7 H17 M3 12 H17 M3 17 H17" stroke="#c0c0c0" stroke-width="1"/><path d="M3 19 L19 3" stroke="#c0c0c0" stroke-width="1.6"/></svg>
<svg style="position:absolute;left:156px;top:657px;" width="22" height="22" viewBox="0 0 22 22"><mask id="mk2"><rect width="22" height="22" fill="#fff"/><circle cx="9.5" cy="9.5" r="6.8" fill="#000"/></mask><circle cx="11" cy="11" r="7.5" fill="none" stroke="#c8c8c8" stroke-width="1.6"/><circle cx="11" cy="11" r="7.5" fill="#c8c8c8" mask="url(#mk2)"/></svg>
<svg style="position:absolute;left:197px;top:657px;" width="22" height="22" viewBox="0 0 22 22"><circle cx="9" cy="4" r="2.5" fill="#c0c0c0"/><path d="M2 13 L11 8.5 L20 13 L11 17.5Z M6.5 10.8 L15.5 15.2 M15.5 10.8 L6.5 15.2" fill="none" stroke="#c0c0c0" stroke-width="1.3"/></svg>
<svg style="position:absolute;left:238px;top:657px;" width="22" height="22" viewBox="0 0 22 22"><circle cx="9" cy="9" r="5.5" fill="none" stroke="#a8a8a8" stroke-width="1.5"/><path d="M13 13 L18 18" stroke="#a8a8a8" stroke-width="1.8"/></svg>
<svg style="position:absolute;left:279px;top:657px;" width="22" height="22" viewBox="0 0 22 22"><rect x="3" y="3" width="11" height="8" fill="#a8a8a8"/><path d="M14 5 L19 3 V11 L14 9Z" fill="#a8a8a8"/><path d="M5 16 Q11 10 17 16 Q11 22 5 16Z" fill="none" stroke="#a8a8a8" stroke-width="1.3"/><circle cx="11" cy="16" r="2" fill="#a8a8a8"/></svg>
<svg style="position:absolute;left:320px;top:657px;" width="22" height="22" viewBox="0 0 22 22"><path d="M2 6 H7 L14 16 H19 M2 16 H7 L14 6 H19" fill="none" stroke="#9b7fdc" stroke-width="1.8"/><path d="M17 3 L20 6 L17 9Z M17 13 L20 16 L17 19Z" fill="#9b7fdc"/></svg>
<div style="position:absolute;left:862px;top:101px;width:136px;height:31px;background:#2f2f2f;border-radius:5px 5px 0 0"></div>
<svg style="position:absolute;left:873px;top:110px;" width="16" height="13" viewBox="0 0 16 13"><rect x="0.5" y="1" width="2.5" height="2" fill="#a8a8a8"/><path d="M5 2 H15" stroke="#a8a8a8" stroke-width="1.5"/><rect x="3" y="5.5" width="2.5" height="2" fill="#a8a8a8"/><path d="M7 6.5 H15" stroke="#a8a8a8" stroke-width="1.5"/><rect x="3" y="9.5" width="2.5" height="2" fill="#a8a8a8"/><path d="M7 10.5 H15" stroke="#a8a8a8" stroke-width="1.5"/></svg>
<div style="position:absolute;left:893px;top:110.00px;font-size:15px;line-height:15px;color:#ababab;font-weight:400;white-space:pre;;letter-spacing:0.502px;">Hierarchy</div>
<svg style="position:absolute;left:1391px;top:109px;" width="12" height="13" viewBox="0 0 12 13"><path d="M3 6 V3.5 Q3 1 6 1 Q9 1 9 3.5" fill="none" stroke="#c0c0c0" stroke-width="1.4"/><rect x="1" y="6.5" width="10" height="6" fill="none" stroke="#c0c0c0" stroke-width="1.4"/></svg>
<div style="position:absolute;left:1417px;top:110px;width:3px;height:3px;background:#c0c0c0;border-radius:50%"></div>
<div style="position:absolute;left:1417px;top:115px;width:3px;height:3px;background:#c0c0c0;border-radius:50%"></div>
<div style="position:absolute;left:1417px;top:120px;width:3px;height:3px;background:#c0c0c0;border-radius:50%"></div>
<div style="position:absolute;left:862px;top:131px;width:573px;height:25px;background:#2d2d2d;"></div>
<svg style="position:absolute;left:868px;top:134px;" width="16" height="16" viewBox="0 0 16 16"><path d="M8 1 V15 M1 8 H15" stroke="#bdbdbd" stroke-width="1.6"/></svg>
<svg style="position:absolute;left:889px;top:139px;" width="11" height="8" viewBox="0 0 11 8"><path d="M0.5 1 L10.5 1 L5.5 7Z" fill="#b0b0b0"/></svg>
<div style="position:absolute;left:1025px;top:134px;width:405px;height:19px;background:#1f1f1f;border-radius:4px"></div>
<svg style="position:absolute;left:1031px;top:137px;" width="14" height="12" viewBox="0 0 14 12"><circle cx="4.5" cy="5" r="3.2" fill="none" stroke="#8a8a8a" stroke-width="1.3"/><path d="M7 7.2 L10 10" stroke="#8a8a8a" stroke-width="1.4"/><path d="M10 4.5 H13" stroke="#8a8a8a" stroke-width="1"/></svg>
<div style="position:absolute;left:1048px;top:137.15px;font-size:14px;line-height:14px;color:#6a6a6a;font-weight:400;white-space:pre;;letter-spacing:0.319px;">All</div>
<div style="position:absolute;left:1409px;top:134px;width:21px;height:19px;background:#2a2a2a;border-radius:3px"></div>
<svg style="position:absolute;left:1412px;top:136px;" width="16" height="16" viewBox="0 0 16 16"><rect x="1" y="8" width="7" height="7" fill="none" stroke="#9a9a9a" stroke-width="1.2"/><path d="M4 4 V1 H15 V12 H12 M7 9 L13 3 M9 3 H13 V7" fill="none" stroke="#9a9a9a" stroke-width="1.2"/></svg>
<div style="position:absolute;left:862px;top:156px;width:573px;height:531px;background:#2d2d2d;"></div>
<div style="position:absolute;left:862px;top:176px;width:40px;height:511px;background:#292929;"></div>
<div style="position:absolute;left:862px;top:156px;width:573px;height:20px;background:#202020;"></div>
<svg style="position:absolute;left:904px;top:162px;" width="12" height="9" viewBox="0 0 12 9"><path d="M0.5 0.5 H11.5 L6 8.5Z" fill="#6a6a6a"/></svg>
<svg style="position:absolute;left:920px;top:157px;" width="17" height="19" viewBox="0 0 17 19"><path d="M6.8 1.8 L1.8 4.8 V11.6 M10.2 1.8 L15.2 4.8 V11.6 M2.6 13.6 L8.5 17.4 L14.4 13.6 M3.6 6.4 L8.5 9.6 L13.4 6.4 M8.5 9.6 V16.8" fill="none" stroke="#d0d0d0" stroke-width="2.4" stroke-linejoin="miter"/></svg>
<div style="position:absolute;left:942px;top:158.80px;font-size:15px;line-height:15px;color:#cfcfcf;font-weight:700;white-space:pre;;letter-spacing:0.075px;">demo_scene_FREE*</div>
<div style="position:absolute;left:1417px;top:160px;width:3px;height:3px;background:#c8c8c8;border-radius:50%"></div>
<div style="position:absolute;left:1417px;top:165px;width:3px;height:3px;background:#c8c8c8;border-radius:50%"></div>
<div style="position:absolute;left:1417px;top:170px;width:3px;height:3px;background:#c8c8c8;border-radius:50%"></div>
<svg style="position:absolute;left:936.0px;top:178px;" width="17" height="17" viewBox="0 0 17 17"><path d="M8.5 1.2 L15.5 4.8 V12.2 L8.5 15.8 L1.5 12.2 V4.8Z M1.5 4.8 L8.5 8.4 L15.5 4.8 M8.5 8.4 V15.8" fill="none" stroke="#9a9a9a" stroke-width="1.3" stroke-linejoin="round"/></svg>
<div style="position:absolute;left:958.0px;top:178.80px;font-size:15px;line-height:15px;color:#a9a9a9;font-weight:400;white-space:pre;;letter-spacing:0.417px;">Main Camera</div>
<svg style="position:absolute;left:922.0px;top:201px;" width="9" height="12" viewBox="0 0 9 12"><path d="M0.5 0.5 V11.5 L8.5 6Z" fill="#6f6f6f"/></svg>
<svg style="position:absolute;left:936.0px;top:198px;" width="17" height="17" viewBox="0 0 17 17"><path d="M8.5 1.2 L15.5 4.8 V12.2 L8.5 15.8 L1.5 12.2 V4.8Z M1.5 4.8 L8.5 8.4 L15.5 4.8 M8.5 8.4 V15.8" fill="none" stroke="#9a9a9a" stroke-width="1.3" stroke-linejoin="round"/></svg>
<div style="position:absolute;left:958.0px;top:198.80px;font-size:15px;line-height:15px;color:#a9a9a9;font-weight:400;white-space:pre;;letter-spacing:0.619px;">Grid</div>
<svg style="position:absolute;left:922.0px;top:221px;" width="9" height="12" viewBox="0 0 9 12"><path d="M0.5 0.5 V11.5 L8.5 6Z" fill="#6f6f6f"/></svg>
<svg style="position:absolute;left:936.0px;top:218px;" width="17" height="17" viewBox="0 0 17 17"><path d="M8.5 1.2 L15.5 4.8 V12.2 L8.5 15.8 L1.5 12.2 V4.8Z M1.5 4.8 L8.5 8.4 L15.5 4.8 M8.5 8.4 V15.8" fill="none" stroke="#9a9a9a" stroke-width="1.3" stroke-linejoin="round"/></svg>
<div style="position:absolute;left:958.0px;top:218.80px;font-size:15px;line-height:15px;color:#a9a9a9;font-weight:400;white-space:pre;;letter-spacing:0.503px;">Props</div>
<svg style="position:absolute;left:922.0px;top:241px;" width="9" height="12" viewBox="0 0 9 12"><path d="M0.5 0.5 V11.5 L8.5 6Z" fill="#6f6f6f"/></svg>
<svg style="position:absolute;left:936.0px;top:238px;" width="17" height="17" viewBox="0 0 17 17"><path d="M8.5 1.2 L15.5 4.8 V12.2 L8.5 15.8 L1.5 12.2 V4.8Z M1.5 4.8 L8.5 8.4 L15.5 4.8 M8.5 8.4 V15.8" fill="none" stroke="#9a9a9a" stroke-width="1.3" stroke-linejoin="round"/></svg>
<div style="position:absolute;left:958.0px;top:238.80px;font-size:15px;line-height:15px;color:#a9a9a9;font-weight:400;white-space:pre;;letter-spacing:0.334px;">Player</div>
<svg style="position:absolute;left:920.0px;top:264px;" width="12" height="9" viewBox="0 0 12 9"><path d="M0.5 0.5 H11.5 L6 8.5Z" fill="#6f6f6f"/></svg>
<svg style="position:absolute;left:936.0px;top:258px;" width="17" height="17" viewBox="0 0 17 17"><path d="M8.5 1.2 L15.5 4.8 V12.2 L8.5 15.8 L1.5 12.2 V4.8Z M1.5 4.8 L8.5 8.4 L15.5 4.8 M8.5 8.4 V15.8" fill="none" stroke="#9a9a9a" stroke-width="1.3" stroke-linejoin="round"/></svg>
<div style="position:absolute;left:958.0px;top:258.80px;font-size:15px;line-height:15px;color:#a9a9a9;font-weight:400;white-space:pre;;letter-spacing:0.546px;">InventoryCanvas</div>
<div style="position:absolute;left:862px;top:277px;width:573px;height:20px;background:#383838;"></div>
<svg style="position:absolute;left:937.5px;top:284px;" width="12" height="9" viewBox="0 0 12 9"><path d="M0.5 0.5 H11.5 L6 8.5Z" fill="#6f6f6f"/></svg>
<svg style="position:absolute;left:953.5px;top:278px;" width="17" height="17" viewBox="0 0 17 17"><path d="M8.5 1.2 L15.5 4.8 V12.2 L8.5 15.8 L1.5 12.2 V4.8Z M1.5 4.8 L8.5 8.4 L15.5 4.8 M8.5 8.4 V15.8" fill="none" stroke="#9a9a9a" stroke-width="1.3" stroke-linejoin="round"/></svg>
<div style="position:absolute;left:975.5px;top:278.80px;font-size:15px;line-height:15px;color:#a9a9a9;font-weight:400;white-space:pre;;letter-spacing:0.622px;">InventoryMenu</div>
<svg style="position:absolute;left:957.0px;top:301px;" width="9" height="12" viewBox="0 0 9 12"><path d="M0.5 0.5 V11.5 L8.5 6Z" fill="#6f6f6f"/></svg>
<svg style="position:absolute;left:971.0px;top:298px;" width="17" height="17" viewBox="0 0 17 17"><path d="M8.5 1.2 L15.5 4.8 V12.2 L8.5 15.8 L1.5 12.2 V4.8Z M1.5 4.8 L8.5 8.4 L15.5 4.8 M8.5 8.4 V15.8" fill="none" stroke="#9a9a9a" stroke-width="1.3" stroke-linejoin="round"/></svg>
<div style="position:absolute;left:993.0px;top:298.80px;font-size:15px;line-height:15px;color:#a9a9a9;font-weight:400;white-space:pre;;letter-spacing:0.589px;">InventorySlots</div>
<svg style="position:absolute;left:957.0px;top:321px;" width="9" height="12" viewBox="0 0 9 12"><path d="M0.5 0.5 V11.5 L8.5 6Z" fill="#6f6f6f"/></svg>
<svg style="position:absolute;left:971.0px;top:318px;" width="17" height="17" viewBox="0 0 17 17"><path d="M8.5 1.2 L15.5 4.8 V12.2 L8.5 15.8 L1.5 12.2 V4.8Z M1.5 4.8 L8.5 8.4 L15.5 4.8 M8.5 8.4 V15.8" fill="none" stroke="#9a9a9a" stroke-width="1.3" stroke-linejoin="round"/></svg>
<div style="position:absolute;left:993.0px;top:318.80px;font-size:15px;line-height:15px;color:#a9a9a9;font-weight:400;white-space:pre;;letter-spacing:0.603px;">InventoryDescription</div>
<svg style="position:absolute;left:936.0px;top:338px;" width="17" height="17" viewBox="0 0 17 17"><path d="M8.5 1.2 L15.5 4.8 V12.2 L8.5 15.8 L1.5 12.2 V4.8Z M1.5 4.8 L8.5 8.4 L15.5 4.8 M8.5 8.4 V15.8" fill="none" stroke="#9a9a9a" stroke-width="1.3" stroke-linejoin="round"/></svg>
<div style="position:absolute;left:958.0px;top:338.80px;font-size:15px;line-height:15px;color:#a9a9a9;font-weight:400;white-space:pre;;letter-spacing:0.483px;">EventSystem</div>
<svg style="position:absolute;left:922.0px;top:361px;" width="9" height="12" viewBox="0 0 9 12"><path d="M0.5 0.5 V11.5 L8.5 6Z" fill="#6f6f6f"/></svg>
<svg style="position:absolute;left:936.0px;top:358px;" width="17" height="17" viewBox="0 0 17 17"><path d="M8.5 1.2 L15.5 4.8 V12.2 L8.5 15.8 L1.5 12.2 V4.8Z M1.5 4.8 L8.5 8.4 L15.5 4.8 M8.5 8.4 V15.8" fill="none" stroke="#9a9a9a" stroke-width="1.3" stroke-linejoin="round"/></svg>
<div style="position:absolute;left:958.0px;top:358.80px;font-size:15px;line-height:15px;color:#a9a9a9;font-weight:400;white-space:pre;;letter-spacing:0.634px;">Burger</div>
<svg style="position:absolute;left:922.0px;top:381px;" width="9" height="12" viewBox="0 0 9 12"><path d="M0.5 0.5 V11.5 L8.5 6Z" fill="#6f6f6f"/></svg>
<svg style="position:absolute;left:936.0px;top:378px;" width="17" height="17" viewBox="0 0 17 17"><path d="M8.5 1.2 L15.5 4.8 V12.2 L8.5 15.8 L1.5 12.2 V4.8Z M1.5 4.8 L8.5 8.4 L15.5 4.8 M8.5 8.4 V15.8" fill="none" stroke="#9a9a9a" stroke-width="1.3" stroke-linejoin="round"/></svg>
<div style="position:absolute;left:958.0px;top:378.80px;font-size:15px;line-height:15px;color:#a9a9a9;font-weight:400;white-space:pre;;letter-spacing:0.723px;">Coke</div>
<div style="position:absolute;left:862px;top:397px;width:573px;height:19px;background:#202020;"></div>
<svg style="position:absolute;left:905px;top:401px;" width="9" height="12" viewBox="0 0 9 12"><path d="M0.5 0.5 V11.5 L8.5 6Z" fill="#6a6a6a"/></svg>
<svg style="position:absolute;left:920px;top:398px;" width="17" height="19" viewBox="0 0 17 19"><path d="M6.8 1.8 L1.8 4.8 V11.6 M10.2 1.8 L15.2 4.8 V11.6 M2.6 13.6 L8.5 17.4 L14.4 13.6 M3.6 6.4 L8.5 9.6 L13.4 6.4 M8.5 9.6 V16.8" fill="none" stroke="#d0d0d0" stroke-width="2.4" stroke-linejoin="miter"/></svg>
<div style="position:absolute;left:941.5px;top:398.80px;font-size:15px;line-height:15px;color:#b8b8b8;font-weight:400;white-space:pre;;letter-spacing:0.528px;">DontDestroyOnLoad</div>
<div style="position:absolute;left:1417px;top:400px;width:3px;height:3px;background:#c8c8c8;border-radius:50%"></div>
<div style="position:absolute;left:1417px;top:405px;width:3px;height:3px;background:#c8c8c8;border-radius:50%"></div>
<div style="position:absolute;left:1417px;top:410px;width:3px;height:3px;background:#c8c8c8;border-radius:50%"></div>
<div style="position:absolute;left:860px;top:101px;width:2px;height:586px;background:#101010;"></div>
<div style="position:absolute;left:1435px;top:101px;width:2px;height:1012px;background:#101010;"></div>
<div style="position:absolute;left:1437px;top:101px;width:135px;height:31px;background:#2f2f2f;border-radius:5px 5px 0 0"></div>
<svg style="position:absolute;left:1451px;top:110px;" width="13" height="13" viewBox="0 0 13 13"><circle cx="6.5" cy="6.5" r="6.3" fill="#a8a8a8"/><rect x="5.4" y="5.2" width="2.2" height="5.3" fill="#2f2f2f"/><circle cx="6.5" cy="3.3" r="1.2" fill="#2f2f2f"/></svg>
<div style="position:absolute;left:1469px;top:110.00px;font-size:15px;line-height:15px;color:#ababab;font-weight:400;white-space:pre;;letter-spacing:0.687px;">Inspector</div>
<svg style="position:absolute;left:1875px;top:109px;" width="12" height="13" viewBox="0 0 12 13"><path d="M3 6 V3.5 Q3 1 6 1 Q9 1 9 3.5" fill="none" stroke="#c0c0c0" stroke-width="1.4"/><rect x="1" y="6.5" width="10" height="6" fill="none" stroke="#c0c0c0" stroke-width="1.4"/></svg>
<div style="position:absolute;left:1901px;top:110px;width:3px;height:3px;background:#c0c0c0;border-radius:50%"></div>
<div style="position:absolute;left:1901px;top:115px;width:3px;height:3px;background:#c0c0c0;border-radius:50%"></div>
<div style="position:absolute;left:1901px;top:120px;width:3px;height:3px;background:#c0c0c0;border-radius:50%"></div>
<div style="position:absolute;left:1437px;top:131px;width:476px;height:982px;background:#2d2d2d;"></div>
<svg style="position:absolute;left:1445px;top:142px;" width="26" height="30" viewBox="0 0 26 30"><path d="M12.5 1.5 L23.5 7 V19.5 L12.5 25 L1.5 19.5 V7Z M1.5 7 L12.5 12.5 L23.5 7 M12.5 12.5 V25" fill="none" stroke="#a8a8a8" stroke-width="1.5" stroke-linejoin="round"/></svg>
<svg style="position:absolute;left:1469px;top:169px;" width="11" height="8" viewBox="0 0 11 8"><path d="M0.5 1 L10.5 1 L5.5 7Z" fill="#a8a8a8"/></svg>
<div style="position:absolute;left:1496px;top:145px;width:17px;height:17px;background:#1c1c1c;border-radius:3px"></div>
<svg style="position:absolute;left:1496px;top:145px;" width="17" height="17" viewBox="0 0 17 17"><path d="M4 8.5 L7.2 11.8 L13.5 4.8" fill="none" stroke="#d2d2d2" stroke-width="1.8"/></svg>
<div style="position:absolute;left:1521px;top:142px;width:297px;height:23px;background:#1e1e1e;border-radius:4px"></div>
<div style="position:absolute;left:1524.5px;top:147.30px;font-size:15px;line-height:15px;color:#d0d0d0;font-weight:700;white-space:pre;;letter-spacing:0.459px;">InventoryMenu</div>
<div style="position:absolute;left:1823px;top:145px;width:17px;height:17px;background:#1c1c1c;border-radius:3px"></div>
<div style="position:absolute;left:1846px;top:146.30px;font-size:15px;line-height:15px;color:#a8a8a8;font-weight:400;white-space:pre;;letter-spacing:0.737px;">Static</div>
<svg style="position:absolute;left:1901px;top:151px;" width="11" height="8" viewBox="0 0 11 8"><path d="M0.5 1 L10.5 1 L5.5 7Z" fill="#b0b0b0"/></svg>
<div style="position:absolute;left:1488px;top:175.80px;font-size:15px;line-height:15px;color:#8a8a8a;font-weight:400;white-space:pre;;letter-spacing:1.006px;">Tag</div>
<div style="position:absolute;left:1520px;top:174px;width:172px;height:20px;background:#3a3a3a;border-radius:3px"></div>
<div style="position:absolute;left:1524.5px;top:174.80px;font-size:15px;line-height:15px;color:#b4b4b4;font-weight:400;white-space:pre;;letter-spacing:0.663px;">Untagged</div>
<svg style="position:absolute;left:1676px;top:180px;" width="11" height="8" viewBox="0 0 11 8"><path d="M0.5 1 L10.5 1 L5.5 7Z" fill="#b0b0b0"/></svg>
<div style="position:absolute;left:1708.3px;top:175.80px;font-size:15px;line-height:15px;color:#8a8a8a;font-weight:400;white-space:pre;;letter-spacing:0.667px;">Layer</div>
<div style="position:absolute;left:1754px;top:174px;width:159px;height:20px;background:#3a3a3a;border-radius:3px 0 0 3px"></div>
<div style="position:absolute;left:1758px;top:174.80px;font-size:15px;line-height:15px;color:#b4b4b4;font-weight:400;white-space:pre;;letter-spacing:0.200px;">UI</div>
<svg style="position:absolute;left:1896px;top:180px;" width="11" height="8" viewBox="0 0 11 8"><path d="M0.5 1 L10.5 1 L5.5 7Z" fill="#b0b0b0"/></svg>
<div style="position:absolute;left:1437px;top:205px;width:476px;height:113px;background:#2d2d2d;"></div>
<div style="position:absolute;left:1437px;top:204px;width:476px;height:1.5px;background:#1a1a1a;"></div>
<div style="position:absolute;left:1437px;top:233px;width:476px;height:1.5px;background:#1a1a1a;"></div>
<div style="position:absolute;left:1437px;top:261px;width:476px;height:1.5px;background:#1a1a1a;"></div>
<div style="position:absolute;left:1437px;top:289px;width:476px;height:1.5px;background:#1a1a1a;"></div>
<div style="position:absolute;left:1437px;top:317px;width:476px;height:1.5px;background:#1a1a1a;"></div>
<svg style="position:absolute;left:1446px;top:213px;" width="9" height="12" viewBox="0 0 9 12"><path d="M0.5 0.5 V11.5 L8.5 6Z" fill="#6a6a6a"/></svg>
<div style="position:absolute;left:1512.3px;top:212.30px;font-size:15px;line-height:15px;color:#c4c4c4;font-weight:700;white-space:pre;;letter-spacing:0.350px;">Rect Transform</div>
<svg style="position:absolute;left:1848px;top:213px;" width="13" height="13" viewBox="0 0 13 13"><circle cx="6.5" cy="6.5" r="6.3" fill="#ababab"/><path d="M4.3 5 Q4.3 2.6 6.5 2.6 Q8.7 2.6 8.7 4.8 Q8.7 6 7.3 6.7 Q6.5 7.1 6.5 8.2" fill="none" stroke="#2d2d2d" stroke-width="1.6"/><circle cx="6.5" cy="10.3" r="1" fill="#2d2d2d"/></svg>
<svg style="position:absolute;left:1872px;top:213px;" width="14" height="13" viewBox="0 0 14 13"><path d="M1 4 H13 M1 9 H13" stroke="#ababab" stroke-width="1.4"/><rect x="8" y="1" width="2.2" height="5" fill="#ababab"/><rect x="4" y="6.5" width="2.2" height="5" fill="#ababab"/></svg>
<div style="position:absolute;left:1902px;top:212px;width:3px;height:3px;background:#b8b8b8;border-radius:50%"></div>
<div style="position:absolute;left:1902px;top:217px;width:3px;height:3px;background:#b8b8b8;border-radius:50%"></div>
<div style="position:absolute;left:1902px;top:222px;width:3px;height:3px;background:#b8b8b8;border-radius:50%"></div>
<svg style="position:absolute;left:1446px;top:242px;" width="9" height="12" viewBox="0 0 9 12"><path d="M0.5 0.5 V11.5 L8.5 6Z" fill="#6a6a6a"/></svg>
<div style="position:absolute;left:1512.3px;top:241.30px;font-size:15px;line-height:15px;color:#c4c4c4;font-weight:700;white-space:pre;;letter-spacing:0.235px;">Canvas Renderer</div>
<svg style="position:absolute;left:1848px;top:242px;" width="13" height="13" viewBox="0 0 13 13"><circle cx="6.5" cy="6.5" r="6.3" fill="#ababab"/><path d="M4.3 5 Q4.3 2.6 6.5 2.6 Q8.7 2.6 8.7 4.8 Q8.7 6 7.3 6.7 Q6.5 7.1 6.5 8.2" fill="none" stroke="#2d2d2d" stroke-width="1.6"/><circle cx="6.5" cy="10.3" r="1" fill="#2d2d2d"/></svg>
<svg style="position:absolute;left:1872px;top:242px;" width="14" height="13" viewBox="0 0 14 13"><path d="M1 4 H13 M1 9 H13" stroke="#ababab" stroke-width="1.4"/><rect x="8" y="1" width="2.2" height="5" fill="#ababab"/><rect x="4" y="6.5" width="2.2" height="5" fill="#ababab"/></svg>
<div style="position:absolute;left:1902px;top:241px;width:3px;height:3px;background:#b8b8b8;border-radius:50%"></div>
<div style="position:absolute;left:1902px;top:246px;width:3px;height:3px;background:#b8b8b8;border-radius:50%"></div>
<div style="position:absolute;left:1902px;top:251px;width:3px;height:3px;background:#b8b8b8;border-radius:50%"></div>
<svg style="position:absolute;left:1446px;top:270px;" width="9" height="12" viewBox="0 0 9 12"><path d="M0.5 0.5 V11.5 L8.5 6Z" fill="#6a6a6a"/></svg>
<div style="position:absolute;left:1487px;top:267px;width:17px;height:17px;background:#1c1c1c;border-radius:3px"></div>
<svg style="position:absolute;left:1487px;top:267px;" width="17" height="17" viewBox="0 0 17 17"><path d="M4 8.5 L7.2 11.8 L13.5 4.8" fill="none" stroke="#d2d2d2" stroke-width="1.8"/></svg>
<div style="position:absolute;left:1512.3px;top:269.30px;font-size:15px;line-height:15px;color:#c4c4c4;font-weight:700;white-space:pre;;letter-spacing:0.385px;">Image</div>
<svg style="position:absolute;left:1848px;top:270px;" width="13" height="13" viewBox="0 0 13 13"><circle cx="6.5" cy="6.5" r="6.3" fill="#ababab"/><path d="M4.3 5 Q4.3 2.6 6.5 2.6 Q8.7 2.6 8.7 4.8 Q8.7 6 7.3 6.7 Q6.5 7.1 6.5 8.2" fill="none" stroke="#2d2d2d" stroke-width="1.6"/><circle cx="6.5" cy="10.3" r="1" fill="#2d2d2d"/></svg>
<svg style="position:absolute;left:1872px;top:270px;" width="14" height="13" viewBox="0 0 14 13"><path d="M1 4 H13 M1 9 H13" stroke="#ababab" stroke-width="1.4"/><rect x="8" y="1" width="2.2" height="5" fill="#ababab"/><rect x="4" y="6.5" width="2.2" height="5" fill="#ababab"/></svg>
<div style="position:absolute;left:1902px;top:269px;width:3px;height:3px;background:#b8b8b8;border-radius:50%"></div>
<div style="position:absolute;left:1902px;top:274px;width:3px;height:3px;background:#b8b8b8;border-radius:50%"></div>
<div style="position:absolute;left:1902px;top:279px;width:3px;height:3px;background:#b8b8b8;border-radius:50%"></div>
<svg style="position:absolute;left:1446px;top:298px;" width="9" height="12" viewBox="0 0 9 12"><path d="M0.5 0.5 V11.5 L8.5 6Z" fill="#6a6a6a"/></svg>
<div style="position:absolute;left:1487px;top:295px;width:17px;height:17px;background:#1c1c1c;border-radius:3px"></div>
<svg style="position:absolute;left:1487px;top:295px;" width="17" height="17" viewBox="0 0 17 17"><path d="M4 8.5 L7.2 11.8 L13.5 4.8" fill="none" stroke="#d2d2d2" stroke-width="1.8"/></svg>
<div style="position:absolute;left:1512.3px;top:297.30px;font-size:15px;line-height:15px;color:#c4c4c4;font-weight:700;white-space:pre;;letter-spacing:0.153px;">Horizontal Layout Group</div>
<svg style="position:absolute;left:1848px;top:298px;" width="13" height="13" viewBox="0 0 13 13"><circle cx="6.5" cy="6.5" r="6.3" fill="#ababab"/><path d="M4.3 5 Q4.3 2.6 6.5 2.6 Q8.7 2.6 8.7 4.8 Q8.7 6 7.3 6.7 Q6.5 7.1 6.5 8.2" fill="none" stroke="#2d2d2d" stroke-width="1.6"/><circle cx="6.5" cy="10.3" r="1" fill="#2d2d2d"/></svg>
<svg style="position:absolute;left:1872px;top:298px;" width="14" height="13" viewBox="0 0 14 13"><path d="M1 4 H13 M1 9 H13" stroke="#ababab" stroke-width="1.4"/><rect x="8" y="1" width="2.2" height="5" fill="#ababab"/><rect x="4" y="6.5" width="2.2" height="5" fill="#ababab"/></svg>
<div style="position:absolute;left:1902px;top:297px;width:3px;height:3px;background:#b8b8b8;border-radius:50%"></div>
<div style="position:absolute;left:1902px;top:302px;width:3px;height:3px;background:#b8b8b8;border-radius:50%"></div>
<div style="position:absolute;left:1902px;top:307px;width:3px;height:3px;background:#b8b8b8;border-radius:50%"></div>
<svg style="position:absolute;left:1462px;top:210px;" width="19" height="19" viewBox="0 0 19 19"><path d="M2 2 L7 7 M2 2 H5.5 M2 2 V5.5 M17 2 L12 7 M17 2 H13.5 M17 2 V5.5 M2 17 L7 12 M2 17 H5.5 M2 17 V13.5 M17 17 L12 12 M17 17 H13.5 M17 17 V13.5" stroke="#a8a8a8" stroke-width="2.2" fill="none"/></svg>
<svg style="position:absolute;left:1461px;top:240px;" width="21" height="16" viewBox="0 0 21 16"><path d="M1 8 Q10.5 -1 20 8 Q10.5 17 1 8Z" fill="none" stroke="#a8a8a8" stroke-width="1.6"/><circle cx="10.5" cy="8" r="3" fill="none" stroke="#a8a8a8" stroke-width="1.6"/></svg>
<svg style="position:absolute;left:1462px;top:266px;" width="19" height="19" viewBox="0 0 19 19"><rect x="2.5" y="2.5" width="14" height="14" fill="none" stroke="#a8a8a8" stroke-width="1.3"/><rect x="1" y="1" width="3" height="3" fill="#a8a8a8"/><rect x="15" y="1" width="3" height="3" fill="#a8a8a8"/><rect x="1" y="15" width="3" height="3" fill="#a8a8a8"/><rect x="15" y="15" width="3" height="3" fill="#a8a8a8"/><path d="M5 13 L8 9.5 L10 11.5 L12 9 L14 13Z" fill="#a8a8a8"/><circle cx="7" cy="6.5" r="1.3" fill="#a8a8a8"/></svg>
<svg style="position:absolute;left:1461px;top:294px;" width="21" height="21" viewBox="0 0 21 21"><rect x="1" y="1" width="19" height="19" fill="none" stroke="#a8a8a8" stroke-width="1.4"/><rect x="4" y="4" width="5" height="13" fill="none" stroke="#a8a8a8" stroke-width="1.4"/><rect x="12" y="4" width="5" height="13" fill="none" stroke="#a8a8a8" stroke-width="1.4"/></svg>
<div style="position:absolute;left:1456px;top:326px;width:41px;height:40px;background:#383838;border-radius:2px"></div>
<div style="position:absolute;left:1462px;top:331px;width:30px;height:30px;background:#d8d8d8;"></div>
<div style="position:absolute;left:1506.7px;top:326.80px;font-size:15px;line-height:15px;color:#8c8c8c;font-weight:400;white-space:pre;;letter-spacing:0.982px;">Default UI Material (Material)</div>
<svg style="position:absolute;left:1883px;top:327px;" width="13" height="13" viewBox="0 0 13 13"><circle cx="6.5" cy="6.5" r="6.3" fill="#ababab"/><path d="M4.3 5 Q4.3 2.6 6.5 2.6 Q8.7 2.6 8.7 4.8 Q8.7 6 7.3 6.7 Q6.5 7.1 6.5 8.2" fill="none" stroke="#2d2d2d" stroke-width="1.6"/><circle cx="6.5" cy="10.3" r="1" fill="#2d2d2d"/></svg>
<div style="position:absolute;left:1908px;top:326px;width:3px;height:3px;background:#a8a8a8;border-radius:50%"></div>
<div style="position:absolute;left:1908px;top:331px;width:3px;height:3px;background:#a8a8a8;border-radius:50%"></div>
<div style="position:absolute;left:1908px;top:336px;width:3px;height:3px;background:#a8a8a8;border-radius:50%"></div>
<svg style="position:absolute;left:1446px;top:366px;" width="9" height="12" viewBox="0 0 9 12"><path d="M0.5 0.5 V11.5 L8.5 6Z" fill="#5a5a5a"/></svg>
<div style="position:absolute;left:1503px;top:357.30px;font-size:15px;line-height:15px;color:#666666;font-weight:400;white-space:pre;;letter-spacing:0.565px;">Shader</div>
<div style="position:absolute;left:1568px;top:354px;width:225px;height:21px;background:#303030;border-radius:3px"></div>
<div style="position:absolute;left:1572px;top:356.30px;font-size:15px;line-height:15px;color:#707070;font-weight:400;white-space:pre;;letter-spacing:0.611px;">UI/Default</div>
<svg style="position:absolute;left:1776px;top:361px;" width="11" height="8" viewBox="0 0 11 8"><path d="M0.5 1 L10.5 1 L5.5 7Z" fill="#6a6a6a"/></svg>
<div style="position:absolute;left:1799px;top:354px;width:55px;height:21px;background:#3e3e3e;border-radius:3px"></div>
<div style="position:absolute;left:1808px;top:356.30px;font-size:15px;line-height:15px;color:#bdbdbd;font-weight:400;white-space:pre;;letter-spacing:0.140px;">Edit...</div>
<div style="position:absolute;left:1860px;top:354px;width:53px;height:21px;background:#3e3e3e;border-radius:3px 0 0 3px"></div>
<svg style="position:absolute;left:1868px;top:357px;" width="20" height="15" viewBox="0 0 20 15"><rect x="2" y="2" width="2.5" height="2" fill="#a8a8a8"/><path d="M6 3 H17" stroke="#a8a8a8" stroke-width="1.5"/><rect x="4.5" y="6.5" width="2.5" height="2" fill="#a8a8a8"/><path d="M9 7.5 H17" stroke="#a8a8a8" stroke-width="1.5"/><rect x="4.5" y="11" width="2.5" height="2" fill="#a8a8a8"/><path d="M9 12 H17" stroke="#a8a8a8" stroke-width="1.5"/></svg>
<svg style="position:absolute;left:1896px;top:361px;" width="11" height="8" viewBox="0 0 11 8"><path d="M0.5 1 L10.5 1 L5.5 7Z" fill="#b0b0b0"/></svg>
<div style="position:absolute;left:1437px;top:386px;width:476px;height:1.5px;background:#1a1a1a;"></div>
<div style="position:absolute;left:1437px;top:402px;width:476px;height:1.5px;background:#1a1a1a;"></div>
<div style="position:absolute;left:1535px;top:413px;width:286px;height:28px;background:#3c3c3c;border-radius:3px;border:1px solid #252525"></div>
<div style="position:absolute;left:1620.4px;top:420.30px;font-size:15px;line-height:15px;color:#bcbcbc;font-weight:400;white-space:pre;;letter-spacing:0.649px;">Add Component</div>
<div style="position:absolute;left:1485px;top:471.87px;font-size:48px;line-height:48px;color:#ffffff;font-weight:400;white-space:pre;-webkit-text-stroke:0.7px #ffffff;letter-spacing:-0.287px;">prement la</div>
<div style="position:absolute;left:1485px;top:528.37px;font-size:48px;line-height:48px;color:#ffffff;font-weight:400;white-space:pre;-webkit-text-stroke:0.7px #ffffff;letter-spacing:-0.808px;">tecla E</div>
<div style="position:absolute;left:1485px;top:586.87px;font-size:48px;line-height:48px;color:#ffffff;font-weight:400;white-space:pre;-webkit-text-stroke:0.7px #ffffff;letter-spacing:-0.706px;">apareix</div>
<div style="position:absolute;left:1485px;top:644.37px;font-size:48px;line-height:48px;color:#ffffff;font-weight:400;white-space:pre;-webkit-text-stroke:0.7px #ffffff;letter-spacing:-0.317px;">l’inventari</div>
<div style="position:absolute;left:1437px;top:887px;width:476px;height:1px;background:#1a1a1a;"></div>
<div style="position:absolute;left:1437px;top:888px;width:476px;height:26px;background:#2a2a2a;"></div>
<div style="position:absolute;left:1447px;top:893.50px;font-size:15px;line-height:15px;color:#bdbdbd;font-weight:700;white-space:pre;;letter-spacing:0.518px;">InventoryMenu</div>
<svg style="position:absolute;left:1562px;top:896px;" width="11" height="8" viewBox="0 0 11 8"><path d="M0.5 1 L10.5 1 L5.5 7Z" fill="#bdbdbd"/></svg>
<div style="position:absolute;left:1578px;top:888px;width:1px;height:26px;background:#1a1a1a;"></div>
<div style="position:absolute;left:1583px;top:899px;width:313px;height:1px;background:#4a4a4a;"></div>
<div style="position:absolute;left:1583px;top:903px;width:313px;height:1px;background:#4a4a4a;"></div>
<div style="position:absolute;left:1897px;top:888px;width:1px;height:26px;background:#1a1a1a;"></div>
<div style="position:absolute;left:1907px;top:893px;width:3px;height:3px;background:#b0b0b0;border-radius:50%"></div>
<div style="position:absolute;left:1907px;top:898px;width:3px;height:3px;background:#b0b0b0;border-radius:50%"></div>
<div style="position:absolute;left:1907px;top:903px;width:3px;height:3px;background:#b0b0b0;border-radius:50%"></div>
<div style="position:absolute;left:1437px;top:914px;width:476px;height:192px;background:#232323;"></div>
<svg style="position:absolute;left:1582px;top:915px;" width="192" height="191" viewBox="0 0 192 191"><rect x="0" y="0" width="20" height="20" fill="#363636"/><rect x="20" y="0" width="20" height="20" fill="#484848"/><rect x="40" y="0" width="20" height="20" fill="#363636"/><rect x="60" y="0" width="20" height="20" fill="#484848"/><rect x="80" y="0" width="20" height="20" fill="#363636"/><rect x="100" y="0" width="20" height="20" fill="#484848"/><rect x="120" y="0" width="20" height="20" fill="#363636"/><rect x="140" y="0" width="20" height="20" fill="#484848"/><rect x="160" y="0" width="20" height="20" fill="#363636"/><rect x="180" y="0" width="20" height="20" fill="#484848"/><rect x="0" y="20" width="20" height="20" fill="#484848"/><rect x="20" y="20" width="20" height="20" fill="#363636"/><rect x="40" y="20" width="20" height="20" fill="#484848"/><rect x="60" y="20" width="20" height="20" fill="#363636"/><rect x="80" y="20" width="20" height="20" fill="#484848"/><rect x="100" y="20" width="20" height="20" fill="#363636"/><rect x="120" y="20" width="20" height="20" fill="#484848"/><rect x="140" y="20" width="20" height="20" fill="#363636"/><rect x="160" y="20" width="20" height="20" fill="#484848"/><rect x="180" y="20" width="20" height="20" fill="#363636"/><rect x="0" y="40" width="20" height="20" fill="#363636"/><rect x="20" y="40" width="20" height="20" fill="#484848"/><rect x="40" y="40" width="20" height="20" fill="#363636"/><rect x="60" y="40" width="20" height="20" fill="#484848"/><rect x="80" y="40" width="20" height="20" fill="#363636"/><rect x="100" y="40" width="20" height="20" fill="#484848"/><rect x="120" y="40" width="20" height="20" fill="#363636"/><rect x="140" y="40" width="20" height="20" fill="#484848"/><rect x="160" y="40" width="20" height="20" fill="#363636"/><rect x="180" y="40" width="20" height="20" fill="#484848"/><rect x="0" y="60" width="20" height="20" fill="#484848"/><rect x="20" y="60" width="20" height="20" fill="#363636"/><rect x="40" y="60" width="20" height="20" fill="#484848"/><rect x="60" y="60" width="20" height="20" fill="#363636"/><rect x="80" y="60" width="20" height="20" fill="#484848"/><rect x="100" y="60" width="20" height="20" fill="#363636"/><rect x="120" y="60" width="20" height="20" fill="#484848"/><rect x="140" y="60" width="20" height="20" fill="#363636"/><rect x="160" y="60" width="20" height="20" fill="#484848"/><rect x="180" y="60" width="20" height="20" fill="#363636"/><rect x="0" y="80" width="20" height="20" fill="#363636"/><rect x="20" y="80" width="20" height="20" fill="#484848"/><rect x="40" y="80" width="20" height="20" fill="#363636"/><rect x="60" y="80" width="20" height="20" fill="#484848"/><rect x="80" y="80" width="20" height="20" fill="#363636"/><rect x="100" y="80" width="20" height="20" fill="#484848"/><rect x="120" y="80" width="20" height="20" fill="#363636"/><rect x="140" y="80" width="20" height="20" fill="#484848"/><rect x="160" y="80" width="20" height="20" fill="#363636"/><rect x="180" y="80" width="20" height="20" fill="#484848"/><rect x="0" y="100" width="20" height="20" fill="#484848"/><rect x="20" y="100" width="20" height="20" fill="#363636"/><rect x="40" y="100" width="20" height="20" fill="#484848"/><rect x="60" y="100" width="20" height="20" fill="#363636"/><rect x="80" y="100" width="20" height="20" fill="#484848"/><rect x="100" y="100" width="20" height="20" fill="#363636"/><rect x="120" y="100" width="20" height="20" fill="#484848"/><rect x="140" y="100" width="20" height="20" fill="#363636"/><rect x="160" y="100" width="20" height="20" fill="#484848"/><rect x="180" y="100" width="20" height="20" fill="#363636"/><rect x="0" y="120" width="20" height="20" fill="#363636"/><rect x="20" y="120" width="20" height="20" fill="#484848"/><rect x="40" y="120" width="20" height="20" fill="#363636"/><rect x="60" y="120" width="20" height="20" fill="#484848"/><rect x="80" y="120" width="20" height="20" fill="#363636"/><rect x="100" y="120" width="20" height="20" fill="#484848"/><rect x="120" y="120" width="20" height="20" fill="#363636"/><rect x="140" y="120" width="20" height="20" fill="#484848"/><rect x="160" y="120" width="20" height="20" fill="#363636"/><rect x="180" y="120" width="20" height="20" fill="#484848"/><rect x="0" y="140" width="20" height="20" fill="#484848"/><rect x="20" y="140" width="20" height="20" fill="#363636"/><rect x="40" y="140" width="20" height="20" fill="#484848"/><rect x="60" y="140" width="20" height="20" fill="#363636"/><rect x="80" y="140" width="20" height="20" fill="#484848"/><rect x="100" y="140" width="20" height="20" fill="#363636"/><rect x="120" y="140" width="20" height="20" fill="#484848"/><rect x="140" y="140" width="20" height="20" fill="#363636"/><rect x="160" y="140" width="20" height="20" fill="#484848"/><rect x="180" y="140" width="20" height="20" fill="#363636"/><rect x="0" y="160" width="20" height="20" fill="#363636"/><rect x="20" y="160" width="20" height="20" fill="#484848"/><rect x="40" y="160" width="20" height="20" fill="#363636"/><rect x="60" y="160" width="20" height="20" fill="#484848"/><rect x="80" y="160" width="20" height="20" fill="#363636"/><rect x="100" y="160" width="20" height="20" fill="#484848"/><rect x="120" y="160" width="20" height="20" fill="#363636"/><rect x="140" y="160" width="20" height="20" fill="#484848"/><rect x="160" y="160" width="20" height="20" fill="#363636"/><rect x="180" y="160" width="20" height="20" fill="#484848"/><rect x="0" y="180" width="20" height="20" fill="#484848"/><rect x="20" y="180" width="20" height="20" fill="#363636"/><rect x="40" y="180" width="20" height="20" fill="#484848"/><rect x="60" y="180" width="20" height="20" fill="#363636"/><rect x="80" y="180" width="20" height="20" fill="#484848"/><rect x="100" y="180" width="20" height="20" fill="#363636"/><rect x="120" y="180" width="20" height="20" fill="#484848"/><rect x="140" y="180" width="20" height="20" fill="#363636"/><rect x="160" y="180" width="20" height="20" fill="#484848"/><rect x="180" y="180" width="20" height="20" fill="#363636"/></svg>
<div style="position:absolute;left:1597px;top:930px;width:162px;height:154px;background:#d9d9d9;border-radius:34px;filter:blur(2.5px)"></div>
<div style="position:absolute;left:1641px;top:915px;width:1px;height:191px;background:repeating-linear-gradient(180deg,#2a2a2a 0 7px,#f0f0f0 7px 12px);"></div>
<div style="position:absolute;left:1713px;top:915px;width:1px;height:191px;background:repeating-linear-gradient(180deg,#2a2a2a 0 7px,#f0f0f0 7px 12px);"></div>
<div style="position:absolute;left:1582px;top:976px;width:192px;height:1px;background:repeating-linear-gradient(90deg,#2a2a2a 0 7px,#f0f0f0 7px 12px);"></div>
<div style="position:absolute;left:1582px;top:1048px;width:192px;height:1px;background:repeating-linear-gradient(90deg,#2a2a2a 0 7px,#f0f0f0 7px 12px);"></div>
<div style="position:absolute;left:1620px;top:1067.30px;font-size:15px;line-height:15px;color:#e6e6e6;font-weight:700;white-space:pre;text-shadow:1px 1px 1px #000,-1px -1px 1px #000,1px -1px 1px #000,-1px 1px 1px #000;letter-spacing:0.543px;">InventoryMenu</div>
<div style="position:absolute;left:1610px;top:1084.80px;font-size:15px;line-height:15px;color:#e6e6e6;font-weight:700;white-space:pre;text-shadow:1px 1px 1px #000,-1px -1px 1px #000,1px -1px 1px #000,-1px 1px 1px #000;letter-spacing:0.486px;">Image Size: 32x32</div>
<div style="position:absolute;left:1437px;top:1106px;width:476px;height:9px;background:#383838;"></div>
<div style="position:absolute;left:0px;top:687px;width:960px;height:32px;background:#101010;"></div>
<svg style="position:absolute;left:12px;top:698px;" width="14" height="14" viewBox="0 0 14 14"><rect x="1" y="1" width="12" height="12" fill="none" stroke="#a8a8a8" stroke-width="1.6"/><path d="M3.5 4.5 H10.5 M3.5 7 H10.5 M3.5 9.5 H10.5" stroke="#a8a8a8" stroke-width="1.3"/></svg>
<div style="position:absolute;left:31.5px;top:697.30px;font-size:15px;line-height:15px;color:#ababab;font-weight:400;white-space:pre;;letter-spacing:0.442px;">Console</div>
<div style="position:absolute;left:125px;top:689px;width:110px;height:30px;background:#2f2f2f;border-radius:5px 5px 0 0"></div>
<div style="position:absolute;left:125px;top:689px;width:110px;height:2.5px;background:#3b6cb0;border-radius:4px 4px 0 0"></div>
<svg style="position:absolute;left:135px;top:700px;" width="20" height="12" viewBox="0 0 20 12"><rect x="0.5" y="0.5" width="19" height="11" rx="5.5" fill="#a8a8a8"/><path d="M5.5 3 V9 M2.5 6 H8.5" stroke="#2f2f2f" stroke-width="1.4"/><circle cx="13.5" cy="4.5" r="1.2" fill="#2f2f2f"/><circle cx="15.5" cy="7.2" r="1.2" fill="#2f2f2f"/></svg>
<div style="position:absolute;left:157.5px;top:697.30px;font-size:15px;line-height:15px;color:#b8b8b8;font-weight:400;white-space:pre;;letter-spacing:0.280px;">Game</div>
<div style="position:absolute;left:939px;top:700px;width:3px;height:3px;background:#c0c0c0;border-radius:50%"></div>
<div style="position:absolute;left:939px;top:705px;width:3px;height:3px;background:#c0c0c0;border-radius:50%"></div>
<div style="position:absolute;left:939px;top:710px;width:3px;height:3px;background:#c0c0c0;border-radius:50%"></div>
<div style="position:absolute;left:0px;top:719px;width:957px;height:25px;background:#353535;"></div>
<div style="position:absolute;left:0px;top:719px;width:113px;height:25px;background:#3a3a3a;"></div>
<div style="position:absolute;left:114px;top:719px;width:105px;height:25px;background:#3a3a3a;"></div>
<div style="position:absolute;left:220px;top:719px;width:199px;height:25px;background:#3a3a3a;"></div>
<div style="position:absolute;left:113px;top:719px;width:1px;height:25px;background:#262626;"></div>
<div style="position:absolute;left:219px;top:719px;width:1px;height:25px;background:#262626;"></div>
<div style="position:absolute;left:419px;top:719px;width:1px;height:25px;background:#262626;"></div>
<div style="position:absolute;left:587px;top:719px;width:1px;height:25px;background:#262626;"></div>
<div style="position:absolute;left:724px;top:719px;width:1px;height:25px;background:#262626;"></div>
<div style="position:absolute;left:757px;top:719px;width:1px;height:25px;background:#262626;"></div>
<div style="position:absolute;left:789px;top:719px;width:1px;height:25px;background:#262626;"></div>
<div style="position:absolute;left:821px;top:719px;width:1px;height:25px;background:#262626;"></div>
<div style="position:absolute;left:871px;top:719px;width:1px;height:25px;background:#262626;"></div>
<div style="position:absolute;left:936px;top:719px;width:1px;height:25px;background:#262626;"></div>
<div style="position:absolute;left:5.5px;top:725.00px;font-size:15px;line-height:15px;color:#b0b0b0;font-weight:400;white-space:pre;;letter-spacing:0.280px;">Game</div>
<svg style="position:absolute;left:97px;top:729px;" width="11" height="8" viewBox="0 0 11 8"><path d="M0.5 1 L10.5 1 L5.5 7Z" fill="#b0b0b0"/></svg>
<div style="position:absolute;left:125.5px;top:725.00px;font-size:15px;line-height:15px;color:#b0b0b0;font-weight:400;white-space:pre;;letter-spacing:0.250px;">Display 1</div>
<svg style="position:absolute;left:205px;top:729px;" width="11" height="8" viewBox="0 0 11 8"><path d="M0.5 1 L10.5 1 L5.5 7Z" fill="#b0b0b0"/></svg>
<div style="position:absolute;left:225px;top:725.00px;font-size:15px;line-height:15px;color:#b0b0b0;font-weight:400;white-space:pre;;letter-spacing:0.294px;">Full HD (1920x1080)</div>
<svg style="position:absolute;left:403px;top:729px;" width="11" height="8" viewBox="0 0 11 8"><path d="M0.5 1 L10.5 1 L5.5 7Z" fill="#b0b0b0"/></svg>
<div style="position:absolute;left:429.3px;top:725.30px;font-size:15px;line-height:15px;color:#a8a8a8;font-weight:400;white-space:pre;;letter-spacing:0.242px;">Scale</div>
<div style="position:absolute;left:481px;top:732px;width:46px;height:2px;background:#6a6a6a;"></div>
<div style="position:absolute;left:475px;top:727px;width:12px;height:12px;background:#9a9a9a;border-radius:50%"></div>
<div style="position:absolute;left:535.7px;top:725.30px;font-size:15px;line-height:15px;color:#a8a8a8;font-weight:400;white-space:pre;;letter-spacing:0.999px;">0.34x</div>
<div style="position:absolute;left:591.3px;top:725.30px;font-size:15px;line-height:15px;color:#6c6c6c;font-weight:400;white-space:pre;;letter-spacing:0.503px;">Play Unfocused</div>
<svg style="position:absolute;left:709px;top:729px;" width="11" height="8" viewBox="0 0 11 8"><path d="M0.5 1 L10.5 1 L5.5 7Z" fill="#6a6a6a"/></svg>
<svg style="position:absolute;left:729px;top:721px;" width="21" height="20" viewBox="0 0 21 20"><ellipse cx="10.5" cy="12" rx="6" ry="7" fill="#a8a8a8"/><circle cx="10.5" cy="5" r="3" fill="#a8a8a8"/><path d="M2 8 L6 10 M19 8 L15 10 M1 13 H5 M20 13 H16 M2 18 L6 16 M19 18 L15 16" stroke="#a8a8a8" stroke-width="1.4"/></svg>
<svg style="position:absolute;left:763px;top:724px;" width="18" height="15" viewBox="0 0 18 15"><path d="M1 5 H5 L10 1 V14 L5 10 H1Z" fill="#a8a8a8"/><path d="M12.5 4.5 Q14.5 7.5 12.5 10.5 M14.5 2.5 Q18 7.5 14.5 12.5" fill="none" stroke="#a8a8a8" stroke-width="1.4"/></svg>
<svg style="position:absolute;left:795px;top:724px;" width="20" height="15" viewBox="0 0 20 15"><rect x="1" y="1" width="18" height="13" fill="none" stroke="#a8a8a8" stroke-width="1.4"/><path d="M3.5 4.5 H16.5 M3.5 7.5 H16.5 M5 10.5 H15 M6 3 V9 M9 3 V9 M12 3 V9" stroke="#a8a8a8" stroke-width="1.1"/></svg>
<div style="position:absolute;left:828px;top:725.30px;font-size:15px;line-height:15px;color:#b0b0b0;font-weight:400;white-space:pre;;letter-spacing:0.878px;">Stats</div>
<div style="position:absolute;left:876px;top:725.30px;font-size:15px;line-height:15px;color:#b0b0b0;font-weight:400;white-space:pre;;letter-spacing:0.471px;">Gizmos</div>
<svg style="position:absolute;left:942px;top:729px;" width="11" height="8" viewBox="0 0 11 8"><path d="M0.5 1 L10.5 1 L5.5 7Z" fill="#b0b0b0"/></svg>
<div style="position:absolute;left:0px;top:744px;width:959px;height:370px;background:#282828;"></div>
<div style="position:absolute;left:957px;top:719px;width:2px;height:395px;background:#1c1c1c;"></div>
<div style="position:absolute;left:151px;top:745px;width:656px;height:369px;background:#15132a;"></div>
<div style="position:absolute;left:200px;top:790px;width:556px;height:300px;background:#1a1831;filter:blur(10px)"></div>
<svg style="position:absolute;left:151px;top:745px;" width="656" height="369" viewBox="0 0 656 369"><path d="M137 181 L189 181 L189 150 L244 121 L367 98 L504 135 L589 135 L589 303 L389 303 L369 295 L309 255 L137 245Z" fill="#333a69"/><path d="M269 243 L369 240 L369 290 Z" fill="#2f6680" opacity="0.5"/><path d="M367 101 L504 138 L594 138" fill="none" stroke="#b8514b" stroke-width="7" stroke-dasharray="13 3"/><rect x="545" y="128" width="50" height="14" fill="#b24c48"/><path d="M133 127 V285" stroke="#c0574d" stroke-width="6" stroke-dasharray="16 2"/><path d="M248 100 H370" stroke="#b8514b" stroke-width="6" stroke-dasharray="12 4"/><path d="M292 300 H395 M288 312 H390 M296 324 H382" stroke="#b3463f" stroke-width="5" stroke-dasharray="11 3"/><path d="M133 260 V290" stroke="#a8403c" stroke-width="6" stroke-dasharray="5 2"/><path d="M545 150 V300" stroke="#c0776f" stroke-width="6" stroke-dasharray="14 3"/><path d="M392 160 H545" stroke="#c0564c" stroke-width="6" stroke-dasharray="12 3"/><path d="M410 300 H545" stroke="#c0564c" stroke-width="6" stroke-dasharray="12 3"/><rect x="170" y="242" width="14" height="8" fill="#e0a63a"/><rect x="235" y="242" width="14" height="8" fill="#e0a63a"/><rect x="314" y="240" width="16" height="9" fill="#8fbf3a"/><rect x="320" y="168" width="12" height="12" fill="#c0564c"/></svg>
<div style="position:absolute;left:227.8px;top:814.9px;width:51px;height:51px;background:rgba(69,80,133,0.97);"></div>
<div style="position:absolute;left:227.8px;top:874.9px;width:51px;height:51px;background:rgba(69,80,133,0.97);"></div>
<div style="position:absolute;left:227.8px;top:934.5px;width:51px;height:51px;background:rgba(69,80,133,0.97);"></div>
<div style="position:absolute;left:227.8px;top:994.2px;width:51px;height:51px;background:rgba(69,80,133,0.97);"></div>
<div style="position:absolute;left:287.8px;top:814.9px;width:51px;height:51px;background:rgba(69,80,133,0.97);"></div>
<div style="position:absolute;left:287.8px;top:874.9px;width:51px;height:51px;background:rgba(69,80,133,0.97);"></div>
<div style="position:absolute;left:287.8px;top:934.5px;width:51px;height:51px;background:rgba(69,80,133,0.97);"></div>
<div style="position:absolute;left:287.8px;top:994.2px;width:51px;height:51px;background:rgba(69,80,133,0.97);"></div>
<div style="position:absolute;left:347.3px;top:814.9px;width:51px;height:51px;background:rgba(69,80,133,0.97);"></div>
<div style="position:absolute;left:347.3px;top:874.9px;width:51px;height:51px;background:rgba(69,80,133,0.97);"></div>
<div style="position:absolute;left:347.3px;top:934.5px;width:51px;height:51px;background:rgba(69,80,133,0.97);"></div>
<div style="position:absolute;left:347.3px;top:994.2px;width:51px;height:51px;background:rgba(69,80,133,0.97);"></div>
<div style="position:absolute;left:407px;top:814.9px;width:51px;height:51px;background:rgba(69,80,133,0.97);"></div>
<div style="position:absolute;left:407px;top:874.9px;width:51px;height:51px;background:rgba(69,80,133,0.97);"></div>
<div style="position:absolute;left:407px;top:934.5px;width:51px;height:51px;background:rgba(69,80,133,0.97);"></div>
<div style="position:absolute;left:407px;top:994.2px;width:51px;height:51px;background:rgba(69,80,133,0.97);"></div>
<div style="position:absolute;left:466.7px;top:814.9px;width:51px;height:51px;background:rgba(69,80,133,0.97);"></div>
<div style="position:absolute;left:466.7px;top:874.9px;width:51px;height:51px;background:rgba(69,80,133,0.97);"></div>
<div style="position:absolute;left:466.7px;top:934.5px;width:51px;height:51px;background:rgba(69,80,133,0.97);"></div>
<div style="position:absolute;left:466.7px;top:994.2px;width:51px;height:51px;background:rgba(69,80,133,0.97);"></div>
<div style="position:absolute;left:613px;top:810px;width:67px;height:67px;background:rgba(150,150,150,0.9);"></div>
<div style="position:absolute;left:553px;top:887px;width:187px;height:161px;background:rgba(150,150,150,0.93);"></div>
<svg style="position:absolute;left:553px;top:887px;" width="187" height="161" viewBox="0 0 187 161"><rect x="75" y="25" width="12" height="30" rx="6" fill="#4f8d9e" opacity="0.6"/><path d="M100 25 H130 V45 L115 58 L100 45Z" fill="none" stroke="#c99a4b" stroke-width="2" opacity="0.8"/><rect x="105" y="75" width="25" height="40" rx="12" fill="#3a3a4a" opacity="0.5"/><rect x="8" y="40" width="8" height="110" fill="none" stroke="#b0706a" stroke-width="2" opacity="0.6"/><rect x="55" y="105" width="12" height="25" fill="#e8e0c0" opacity="0.7"/><path d="M0 143 H75 M100 100 H150 M140 5 V115" stroke="#c0776f" stroke-width="4" opacity="0.6" stroke-dasharray="10 3"/><path d="M150 10 V115" stroke="#7b70b0" stroke-width="8" opacity="0.45" stroke-dasharray="12 5"/></svg>
<div style="position:absolute;left:961px;top:689px;width:118px;height:30px;background:#2f2f2f;border-radius:5px 5px 0 0"></div>
<svg style="position:absolute;left:972px;top:697px;" width="17" height="14" viewBox="0 0 17 14"><path d="M1 1 H6 L8 3 H16 V13 H1Z" fill="#a8a8a8"/></svg>
<div style="position:absolute;left:993px;top:697.70px;font-size:15px;line-height:15px;color:#ababab;font-weight:400;white-space:pre;;letter-spacing:0.752px;">Project</div>
<svg style="position:absolute;left:1391px;top:697px;" width="12" height="13" viewBox="0 0 12 13"><path d="M3 6 V3.5 Q3 1 6 1 Q9 1 9 3.5" fill="none" stroke="#c0c0c0" stroke-width="1.4"/><rect x="1" y="6.5" width="10" height="6" fill="none" stroke="#c0c0c0" stroke-width="1.4"/></svg>
<div style="position:absolute;left:1417px;top:698px;width:3px;height:3px;background:#c0c0c0;border-radius:50%"></div>
<div style="position:absolute;left:1417px;top:703px;width:3px;height:3px;background:#c0c0c0;border-radius:50%"></div>
<div style="position:absolute;left:1417px;top:708px;width:3px;height:3px;background:#c0c0c0;border-radius:50%"></div>
<div style="position:absolute;left:961px;top:719px;width:474px;height:26px;background:#2d2d2d;"></div>
<svg style="position:absolute;left:968px;top:723px;" width="17" height="17" viewBox="0 0 17 17"><path d="M8.5 1 V16 M1 8.5 H16" stroke="#bdbdbd" stroke-width="1.6"/></svg>
<svg style="position:absolute;left:989px;top:728px;" width="11" height="8" viewBox="0 0 11 8"><path d="M0.5 1 L10.5 1 L5.5 7Z" fill="#b0b0b0"/></svg>
<div style="position:absolute;left:1017px;top:722px;width:232px;height:19px;background:#1e1e1e;border-radius:4px"></div>
<svg style="position:absolute;left:1022px;top:725px;" width="12" height="12" viewBox="0 0 12 12"><circle cx="5" cy="5" r="3.3" fill="none" stroke="#a0a0a0" stroke-width="1.4"/><path d="M7.3 7.3 L10.5 10.5" stroke="#a0a0a0" stroke-width="1.8"/></svg>
<svg style="position:absolute;left:1231px;top:724px;" width="17" height="16" viewBox="0 0 17 16"><rect x="1" y="8" width="7" height="7" fill="none" stroke="#9a9a9a" stroke-width="1.2"/><path d="M4 4 V1 H15 V12 H12 M7 9 L13 3 M9 3 H13 V7" fill="none" stroke="#9a9a9a" stroke-width="1.2"/></svg>
<div style="position:absolute;left:1254px;top:719px;width:1px;height:26px;background:#232323;"></div>
<div style="position:absolute;left:1286px;top:719px;width:1px;height:26px;background:#232323;"></div>
<div style="position:absolute;left:1318px;top:719px;width:1px;height:26px;background:#232323;"></div>
<div style="position:absolute;left:1351px;top:719px;width:1px;height:26px;background:#232323;"></div>
<div style="position:absolute;left:1383px;top:719px;width:1px;height:26px;background:#232323;"></div>
<svg style="position:absolute;left:1260px;top:723px;" width="24" height="18" viewBox="0 0 24 18"><circle cx="8" cy="12" r="5" fill="#a8a8a8"/><rect x="4" y="1" width="8" height="7" fill="#a8a8a8"/><path d="M15 7 L21 15 H12Z" fill="#a8a8a8"/></svg>
<svg style="position:absolute;left:1291px;top:723px;" width="20" height="18" viewBox="0 0 20 18"><path d="M2 9 L10 1 H18 V9 L10 17Z" fill="#a8a8a8"/><circle cx="14" cy="5" r="1.6" fill="#2d2d2d"/></svg>
<svg style="position:absolute;left:1324px;top:722px;" width="20" height="20" viewBox="0 0 20 20"><circle cx="10" cy="10" r="9" fill="#bcbcbc"/><rect x="8.6" y="4" width="2.8" height="8" fill="#2d2d2d"/><circle cx="10" cy="14.8" r="1.5" fill="#2d2d2d"/></svg>
<svg style="position:absolute;left:1357px;top:723px;" width="19" height="18" viewBox="0 0 19 18"><path d="M9.5 1 L12 7 L18 7.3 L13.3 11.3 L15 17.5 L9.5 14 L4 17.5 L5.7 11.3 L1 7.3 L7 7Z" fill="#a0a0a0"/></svg>
<svg style="position:absolute;left:1390px;top:724px;" width="22" height="15" viewBox="0 0 22 15"><path d="M1 7.5 Q11 -2 21 7.5 Q11 17 1 7.5Z" fill="#5a5a5a"/><circle cx="11" cy="7.5" r="3" fill="#3a3a3a"/></svg>
<div style="position:absolute;left:1412px;top:725.30px;font-size:15px;line-height:15px;color:#a8a8a8;font-weight:400;white-space:pre;;letter-spacing:0.512px;">31</div>
<div style="position:absolute;left:961px;top:745px;width:474px;height:369px;background:#2d2d2d;"></div>
<div style="position:absolute;left:1221px;top:745px;width:214px;height:369px;background:#292929;"></div>
<div style="position:absolute;left:1219px;top:745px;width:1px;height:369px;background:#333333;"></div>
<div style="position:absolute;left:1220px;top:745px;width:1px;height:369px;background:#1c1c1c;"></div>
<div style="position:absolute;left:1221px;top:745px;width:214px;height:26px;background:#2e2e2e;"></div>
<div style="position:absolute;left:1226px;top:749.60px;font-size:15px;line-height:15px;color:#8f8f8f;font-weight:400;white-space:pre;;letter-spacing:0.777px;">Assets</div>
<svg style="position:absolute;left:1284px;top:754px;" width="8" height="12" viewBox="0 0 8 12"><path d="M1.5 1 L6.5 6 L1.5 11" fill="none" stroke="#8a8a8a" stroke-width="1.5"/></svg>
<div style="position:absolute;left:1296px;top:749.60px;font-size:15px;line-height:15px;color:#c4c4c4;font-weight:700;white-space:pre;;letter-spacing:0.390px;">Scripts</div>
<svg style="position:absolute;left:1243px;top:774px;" width="16" height="17" viewBox="0 0 16 17"><path d="M1 1 H11 L15 5 V16 H1Z" fill="#d8d8d8"/><path d="M5.5 4 L4.5 14 M10.5 4 L9.5 14 M3 7 H13 M2.5 11 H12.5" stroke="#3b8a3b" stroke-width="1.5"/></svg>
<div style="position:absolute;left:1263px;top:773.70px;font-size:15px;line-height:15px;color:#b4b4b4;font-weight:400;white-space:pre;;letter-spacing:0.606px;">InventoryManager</div>
<svg style="position:absolute;left:1243px;top:794px;" width="16" height="17" viewBox="0 0 16 17"><path d="M1 1 H11 L15 5 V16 H1Z" fill="#d8d8d8"/><path d="M5.5 4 L4.5 14 M10.5 4 L9.5 14 M3 7 H13 M2.5 11 H12.5" stroke="#3b8a3b" stroke-width="1.5"/></svg>
<div style="position:absolute;left:1263px;top:793.70px;font-size:15px;line-height:15px;color:#b4b4b4;font-weight:400;white-space:pre;;letter-spacing:0.337px;">Item</div>
<svg style="position:absolute;left:1243px;top:814px;" width="16" height="17" viewBox="0 0 16 17"><path d="M1 1 H11 L15 5 V16 H1Z" fill="#d8d8d8"/><path d="M5.5 4 L4.5 14 M10.5 4 L9.5 14 M3 7 H13 M2.5 11 H12.5" stroke="#3b8a3b" stroke-width="1.5"/></svg>
<div style="position:absolute;left:1263px;top:813.70px;font-size:15px;line-height:15px;color:#b4b4b4;font-weight:400;white-space:pre;;letter-spacing:0.453px;">ItemSlot</div>
<div style="position:absolute;left:1221px;top:1089px;width:214px;height:25px;background:#2e2e2e;"></div>
<div style="position:absolute;left:1352px;top:1100px;width:64px;height:2px;background:#5a5a5a;"></div>
<div style="position:absolute;left:1346px;top:1095px;width:12px;height:12px;background:#8a8a8a;border-radius:50%"></div>
<svg style="position:absolute;left:966px;top:751px;" width="12" height="9" viewBox="0 0 12 9"><path d="M0.5 0.5 H11.5 L6 8.5Z" fill="#5f5f5f"/></svg>
<svg style="position:absolute;left:983px;top:749px;" width="15" height="15" viewBox="0 0 15 15"><path d="M7.5 1 L9.6 5.6 L14.5 6 L10.8 9.3 L11.9 14.2 L7.5 11.6 L3.1 14.2 L4.2 9.3 L0.5 6 L5.4 5.6Z" fill="#a8a8a8"/></svg>
<div style="position:absolute;left:1005.5px;top:747.00px;font-size:15px;line-height:15px;color:#c0c0c0;font-weight:700;white-space:pre;;letter-spacing:0.312px;">Favorites</div>
<svg style="position:absolute;left:1000px;top:767px;" width="16" height="16" viewBox="0 0 16 16"><circle cx="6.3" cy="6.3" r="4.8" fill="none" stroke="#a0a0a0" stroke-width="1.5"/><path d="M9.8 9.8 L14.5 14.5" stroke="#a0a0a0" stroke-width="2"/></svg>
<div style="position:absolute;left:1021px;top:767.30px;font-size:15px;line-height:15px;color:#a8a8a8;font-weight:400;white-space:pre;;letter-spacing:0.459px;">All Materials</div>
<svg style="position:absolute;left:1000px;top:787px;" width="16" height="16" viewBox="0 0 16 16"><circle cx="6.3" cy="6.3" r="4.8" fill="none" stroke="#a0a0a0" stroke-width="1.5"/><path d="M9.8 9.8 L14.5 14.5" stroke="#a0a0a0" stroke-width="2"/></svg>
<div style="position:absolute;left:1021px;top:787.30px;font-size:15px;line-height:15px;color:#a8a8a8;font-weight:400;white-space:pre;;letter-spacing:0.555px;">All Models</div>
<svg style="position:absolute;left:1000px;top:807px;" width="16" height="16" viewBox="0 0 16 16"><circle cx="6.3" cy="6.3" r="4.8" fill="none" stroke="#a0a0a0" stroke-width="1.5"/><path d="M9.8 9.8 L14.5 14.5" stroke="#a0a0a0" stroke-width="2"/></svg>
<div style="position:absolute;left:1021px;top:807.30px;font-size:15px;line-height:15px;color:#a8a8a8;font-weight:400;white-space:pre;;letter-spacing:0.465px;">All Prefabs</div>
<svg style="position:absolute;left:966px;top:850px;" width="12" height="9" viewBox="0 0 12 9"><path d="M0.5 0.5 H11.5 L6 8.5Z" fill="#5f5f5f"/></svg>
<svg style="position:absolute;left:982px;top:846px;" width="19" height="15" viewBox="0 0 19 15"><path d="M1 2 H6.5 L8 4 H14 V6 H4 L1 14Z" fill="#a8a8a8"/><path d="M4 7 H18 L15 14 H1Z" fill="#a8a8a8"/></svg>
<div style="position:absolute;left:1005.5px;top:846.30px;font-size:15px;line-height:15px;color:#c0c0c0;font-weight:700;white-space:pre;;letter-spacing:0.499px;">Assets</div>
<svg style="position:absolute;left:985px;top:868px;" width="9" height="12" viewBox="0 0 9 12"><path d="M0.5 0.5 V11.5 L8.5 6Z" fill="#5f5f5f"/></svg>
<svg style="position:absolute;left:1001px;top:867px;" width="16" height="14" viewBox="0 0 16 14"><path d="M1 1 H6 L8 3 H15 V13 H1Z" fill="#a8a8a8"/></svg>
<div style="position:absolute;left:1021px;top:866.30px;font-size:15px;line-height:15px;color:#a8a8a8;font-weight:400;white-space:pre;width:199px;overflow:hidden;padding-bottom:6px;letter-spacing:0.45px;">Medieval_pixel_art_asset_FREE</div>
<svg style="position:absolute;left:1001px;top:887px;" width="16" height="14" viewBox="0 0 16 14"><path d="M1 1 H6 L8 3 H15 V13 H1Z" fill="#a8a8a8"/></svg>
<div style="position:absolute;left:1021px;top:886.30px;font-size:15px;line-height:15px;color:#a8a8a8;font-weight:400;white-space:pre;;letter-spacing:0.714px;">Objectes</div>
<svg style="position:absolute;left:1001px;top:907px;" width="16" height="14" viewBox="0 0 16 14"><path d="M1 1 H6 L8 3 H15 V13 H1Z" fill="#a8a8a8"/></svg>
<div style="position:absolute;left:1021px;top:906.30px;font-size:15px;line-height:15px;color:#a8a8a8;font-weight:400;white-space:pre;;letter-spacing:0.499px;">Prefabs</div>
<svg style="position:absolute;left:1001px;top:927px;" width="16" height="14" viewBox="0 0 16 14"><path d="M1 1 H6 L8 3 H15 V13 H1Z" fill="#a8a8a8"/></svg>
<div style="position:absolute;left:1021px;top:926.30px;font-size:15px;line-height:15px;color:#a8a8a8;font-weight:400;white-space:pre;;letter-spacing:0.431px;">Scenes</div>
<div style="position:absolute;left:961px;top:944px;width:259px;height:20px;background:#383838;"></div>
<svg style="position:absolute;left:1001px;top:947px;" width="16" height="14" viewBox="0 0 16 14"><path d="M1 1 H6 L8 3 H15 V13 H1Z" fill="#a8a8a8"/></svg>
<div style="position:absolute;left:1021px;top:946.30px;font-size:15px;line-height:15px;color:#a8a8a8;font-weight:400;white-space:pre;;letter-spacing:0.726px;">Scripts</div>
<svg style="position:absolute;left:985px;top:968px;" width="9" height="12" viewBox="0 0 9 12"><path d="M0.5 0.5 V11.5 L8.5 6Z" fill="#5f5f5f"/></svg>
<svg style="position:absolute;left:1001px;top:967px;" width="16" height="14" viewBox="0 0 16 14"><path d="M1 1 H6 L8 3 H15 V13 H1Z" fill="#a8a8a8"/></svg>
<div style="position:absolute;left:1021px;top:966.30px;font-size:15px;line-height:15px;color:#a8a8a8;font-weight:400;white-space:pre;;letter-spacing:0.714px;">Settings</div>
<svg style="position:absolute;left:985px;top:988px;" width="9" height="12" viewBox="0 0 9 12"><path d="M0.5 0.5 V11.5 L8.5 6Z" fill="#5f5f5f"/></svg>
<svg style="position:absolute;left:1001px;top:987px;" width="16" height="14" viewBox="0 0 16 14"><path d="M1 1 H6 L8 3 H15 V13 H1Z" fill="#a8a8a8"/></svg>
<div style="position:absolute;left:1021px;top:986.30px;font-size:15px;line-height:15px;color:#a8a8a8;font-weight:400;white-space:pre;;letter-spacing:0.682px;">TextMesh Pro</div>
<svg style="position:absolute;left:985px;top:1008px;" width="9" height="12" viewBox="0 0 9 12"><path d="M0.5 0.5 V11.5 L8.5 6Z" fill="#5f5f5f"/></svg>
<svg style="position:absolute;left:1001px;top:1007px;" width="16" height="14" viewBox="0 0 16 14"><path d="M1 1 H6 L8 3 H15 V13 H1Z" fill="#a8a8a8"/></svg>
<div style="position:absolute;left:1021px;top:1006.30px;font-size:15px;line-height:15px;color:#a8a8a8;font-weight:400;white-space:pre;;letter-spacing:0.550px;">Wizard - 2D Character</div>
<svg style="position:absolute;left:968px;top:1027px;" width="9" height="12" viewBox="0 0 9 12"><path d="M0.5 0.5 V11.5 L8.5 6Z" fill="#5f5f5f"/></svg>
<svg style="position:absolute;left:984px;top:1026px;" width="16" height="14" viewBox="0 0 16 14"><path d="M1 1 H6 L8 3 H15 V13 H1Z" fill="#a8a8a8"/></svg>
<div style="position:absolute;left:1005px;top:1025.80px;font-size:15px;line-height:15px;color:#c0c0c0;font-weight:700;white-space:pre;;letter-spacing:0.424px;">Packages</div>
<div style="position:absolute;left:959px;top:687px;width:2px;height:427px;background:#101010;"></div>
<div style="position:absolute;left:0px;top:1115px;width:1913px;height:24px;background:#101010;"></div>
<div style="position:absolute;left:1820px;top:1114px;width:1px;height:25px;background:#262626;"></div>
<div style="position:absolute;left:1853px;top:1114px;width:1px;height:25px;background:#262626;"></div>
<div style="position:absolute;left:1886px;top:1114px;width:1px;height:25px;background:#262626;"></div>
<svg style="position:absolute;left:1827px;top:1120px;" width="19" height="17" viewBox="0 0 19 17"><ellipse cx="9.5" cy="10" rx="5.5" ry="6.5" fill="#a8a8a8"/><circle cx="9.5" cy="3.5" r="2.7" fill="#a8a8a8"/><path d="M1 6 L5 8 M18 6 L14 8 M1 11 H4 M18 11 H15 M1 16 L5 14 M18 16 L14 14" stroke="#a8a8a8" stroke-width="1.3"/><path d="M1 1 L18 16" stroke="#101010" stroke-width="2.5"/><path d="M1 1 L18 16" stroke="#a8a8a8" stroke-width="1"/></svg>
<svg style="position:absolute;left:1861px;top:1120px;" width="18" height="17" viewBox="0 0 18 17"><ellipse cx="9" cy="3.5" rx="7.5" ry="2.7" fill="#a8a8a8"/><path d="M1.5 6 Q9 10 16.5 6 V9 Q9 13 1.5 9Z M1.5 11 Q9 15 16.5 11 V14 Q9 18 1.5 14Z" fill="#a8a8a8"/><path d="M1 16 L17 2" stroke="#101010" stroke-width="2"/></svg>
<svg style="position:absolute;left:1893px;top:1120px;" width="19" height="18" viewBox="0 0 19 18"><circle cx="9.5" cy="9" r="7.5" fill="none" stroke="#a8a8a8" stroke-width="1.5"/><path d="M5.5 9 L8.5 12 L13.5 6" fill="none" stroke="#a8a8a8" stroke-width="1.5"/></svg>
<svg style="position:absolute;left:0px;top:0px;pointer-events:none" width="1913" height="1139" viewBox="0 0 1913 1139"><path d="M1108 512 L918.5 91" stroke="#f4f4f4" stroke-width="1.6"/><path d="M916 85 L916.5 95 L923 92.5Z" fill="#f4f4f4"/><path d="M722 583 L431 885" stroke="#f4f4f4" stroke-width="1.6"/><path d="M427 889.5 L430.5 880.5 L436 885.5Z" fill="#f4f4f4"/></svg>
</body></html>
